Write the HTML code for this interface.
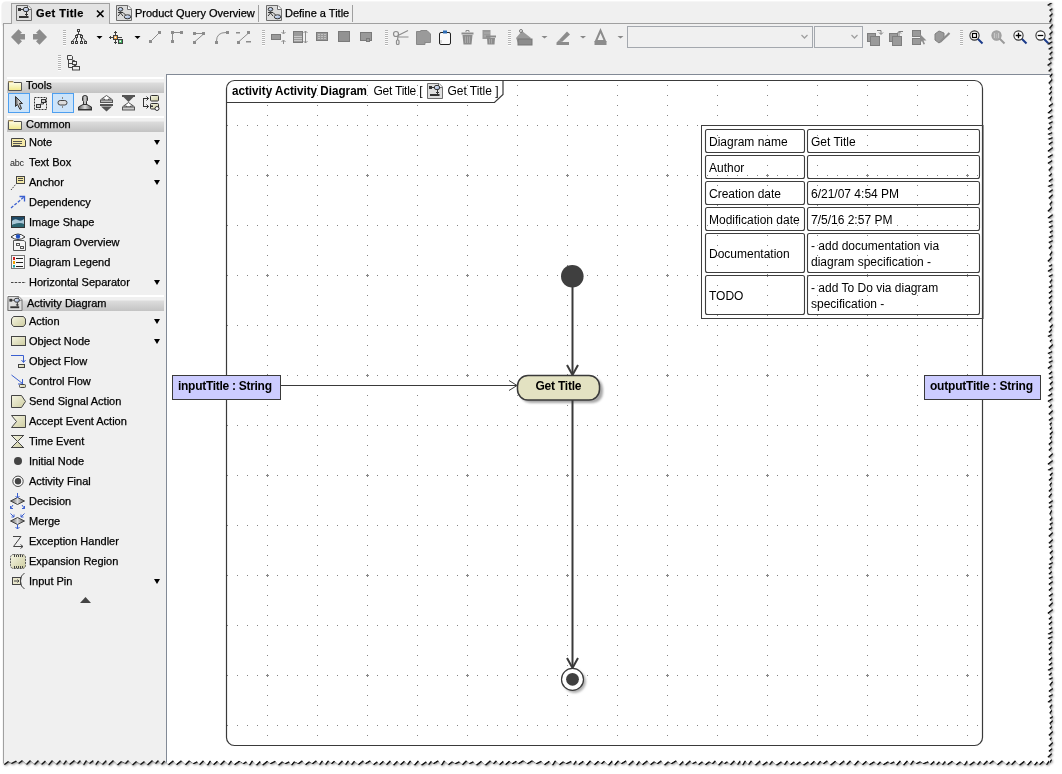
<!DOCTYPE html>
<html><head><meta charset="utf-8"><style>
*{box-sizing:border-box}
html,body{margin:0;padding:0;background:#fff;width:1062px;height:774px;overflow:hidden;font-family:"Liberation Sans", sans-serif}
#shadow{position:absolute;left:0;top:0;width:1062px;height:774px;filter:drop-shadow(1px 1px 0.4px rgba(0,0,0,.85)) drop-shadow(1px 1px 1.2px rgba(0,0,0,.45))}
#win{position:absolute;left:0;top:0;width:1062px;height:774px;background:#f0f0f0;clip-path:polygon(2px 4px,4px 2px,1051.5px 2px,1047px 5px,1052px 8px,1049px 10px,1052px 13px,1049px 16px,1051px 18px,1049px 22px,1052px 24px,1049px 28px,1052px 31px,1049px 34px,1051px 37px,1048px 39px,1052px 41px,1047px 44px,1052px 46px,1048px 49px,1052px 51px,1049px 54px,1052px 57px,1048px 59px,1051px 62px,1047px 65px,1051px 68px,1048px 71px,1052px 73px,1049px 76px,1051.5px 79px,1048px 83px,1051px 86px,1049px 89px,1051px 91px,1048px 94px,1051px 96px,1049px 100px,1052px 103px,1048px 106px,1051.5px 109px,1047px 113px,1052px 115px,1047px 118px,1052px 121px,1048px 123px,1051px 126px,1047px 129px,1051.5px 132px,1047px 134px,1052px 137px,1047px 139px,1052px 141px,1048px 144px,1052px 147px,1047px 151px,1052px 154px,1047px 157px,1051.5px 160px,1047px 163px,1051.5px 166px,1048px 170px,1051px 173px,1048px 176px,1052px 178px,1048px 181px,1052px 184px,1047px 186px,1052px 189px,1048px 192px,1052px 194px,1048px 198px,1051.5px 201px,1049px 204px,1051px 207px,1047px 211px,1052px 214px,1047px 218px,1052px 220px,1048px 222px,1052px 225px,1048px 227px,1052px 230px,1049px 232px,1052px 235px,1048px 237px,1052px 240px,1048px 242px,1051px 245px,1048px 248px,1051.5px 251px,1049px 255px,1051px 257px,1047px 261px,1051.5px 264px,1048px 266px,1051.5px 268px,1047px 271px,1052px 274px,1048px 276px,1051.5px 279px,1049px 282px,1051.5px 285px,1048px 287px,1051.5px 290px,1048px 293px,1051.5px 295px,1048px 298px,1051px 300px,1048px 303px,1051px 306px,1049px 309px,1051.5px 311px,1048px 315px,1051.5px 317px,1048px 321px,1052px 324px,1049px 327px,1051px 329px,1048px 332px,1051px 334px,1047px 336px,1051.5px 339px,1049px 341px,1052px 344px,1048px 348px,1051.5px 351px,1047px 353px,1051px 356px,1048px 358px,1052px 360px,1048px 362px,1051px 365px,1047px 368px,1051.5px 371px,1048px 374px,1052px 376px,1048px 378px,1052px 381px,1049px 384px,1052px 387px,1048px 390px,1051.5px 393px,1047px 396px,1052px 398px,1047px 401px,1051px 404px,1048px 407px,1052px 410px,1048px 414px,1052px 417px,1048px 420px,1051px 422px,1049px 424px,1051px 427px,1049px 429px,1052px 431px,1049px 434px,1051px 436px,1049px 438px,1051.5px 441px,1048px 444px,1051px 447px,1048px 450px,1052px 453px,1048px 457px,1052px 460px,1047px 464px,1052px 467px,1047px 470px,1052px 472px,1049px 475px,1051.5px 477px,1048px 480px,1051px 482px,1049px 485px,1051px 488px,1048px 491px,1051px 493px,1048px 497px,1052px 500px,1048px 503px,1051.5px 505px,1048px 507px,1051px 510px,1049px 514px,1051.5px 517px,1049px 520px,1052px 522px,1049px 524px,1051.5px 527px,1048px 529px,1052px 532px,1048px 536px,1052px 539px,1048px 543px,1051.5px 545px,1048px 547px,1052px 550px,1049px 553px,1052px 556px,1049px 559px,1052px 562px,1048px 564px,1051px 566px,1048px 568px,1051px 571px,1048px 574px,1052px 576px,1048px 578px,1052px 581px,1048px 584px,1051.5px 587px,1048px 590px,1052px 593px,1048px 596px,1051.5px 598px,1049px 600px,1052px 602px,1048px 606px,1052px 609px,1047px 613px,1051px 616px,1048px 619px,1051.5px 621px,1048px 624px,1051.5px 627px,1048px 629px,1052px 631px,1047px 634px,1052px 636px,1047px 638px,1051.5px 641px,1048px 644px,1051px 646px,1048px 649px,1051px 652px,1048px 654px,1051.5px 657px,1048px 660px,1051.5px 662px,1048px 665px,1052px 667px,1047px 670px,1051px 672px,1048px 675px,1052px 677px,1048px 679px,1052px 681px,1049px 685px,1052px 688px,1048px 691px,1052px 694px,1048px 696px,1051px 699px,1047px 702px,1051.5px 704px,1049px 707px,1051px 710px,1049px 713px,1052px 716px,1049px 718px,1052px 720px,1049px 723px,1051px 726px,1049px 728px,1052px 731px,1048px 735px,1051px 737px,1049px 739px,1052px 742px,1048px 746px,1051.5px 748px,1048px 751px,1051px 753px,1047px 757px,1051px 759px,1049px 762px,1049px 760px,1046px 764px,1043px 760.5px,1039px 764px,1037px 761px,1034px 764.5px,1031px 760px,1027px 764.5px,1024px 760.5px,1019px 764.5px,1015px 760px,1011px 764px,1009px 761px,1006px 764px,1002px 760px,997px 764px,993px 760px,989px 763px,987px 760px,983px 764px,980px 760.5px,977px 764px,974px 761px,969px 764.5px,967px 760px,964px 764.5px,960px 761px,956px 764px,952px 760.5px,947px 764px,945px 760.5px,942px 764px,939px 761px,936px 764px,934px 760.5px,930px 764px,928px 761px,923px 763px,920px 761px,916px 763px,913px 760px,910px 764px,907px 760px,903px 764.5px,900px 760px,896px 764.5px,894px 761px,890px 763px,888px 761px,883px 764px,880px 761px,877px 764px,874px 761px,869px 764px,866px 760.5px,862px 764px,858px 760px,854px 764.5px,850px 760px,846px 764px,844px 760px,839px 764px,835px 760.5px,830px 764.5px,827px 760px,823px 763px,820px 760.5px,817px 764px,814px 760.5px,810px 764px,808px 761px,803px 764.5px,800px 761px,796px 764px,794px 761px,790px 764px,787px 760px,784px 764px,781px 761px,776px 764.5px,772px 760.5px,769px 764px,767px 761px,762px 764.5px,760px 760px,755px 764.5px,751px 760px,748px 764px,745px 760px,742px 764.5px,740px 760px,737px 764px,734px 760px,730px 764px,727px 761px,724px 763px,722px 760.5px,718px 764.5px,715px 760px,712px 763px,709px 761px,705px 764px,702px 761px,698px 764px,696px 761px,692px 763px,690px 760px,685px 764.5px,683px 760.5px,679px 764.5px,676px 760px,671px 763px,668px 761px,664px 764.5px,661px 760px,657px 763px,654px 761px,650px 764px,647px 760px,642px 764px,639px 760.5px,636px 764.5px,633px 760px,628px 764.5px,626px 760px,621px 763px,618px 760px,614px 764.5px,612px 760px,608px 764.5px,604px 760.5px,601px 763px,598px 760.5px,594px 764px,590px 760px,586px 764.5px,583px 760.5px,578px 764px,576px 760px,573px 764px,571px 760.5px,566px 763px,563px 761px,559px 764px,555px 760px,552px 764.5px,549px 760.5px,544px 764px,541px 760.5px,536px 763px,532px 760px,527px 763px,523px 760px,518px 763px,516px 760.5px,512px 763px,509px 760.5px,505px 764px,503px 760.5px,499px 764px,496px 760px,493px 763px,490px 760px,485px 764.5px,481px 760.5px,476px 764.5px,473px 761px,469px 763px,466px 760px,462px 764px,459px 761px,455px 763px,452px 761px,448px 764px,444px 760px,441px 764.5px,438px 760px,433px 763px,431px 760.5px,428px 764px,426px 761px,421px 764.5px,418px 760px,414px 764.5px,410px 760px,407px 764px,404px 760.5px,400px 764px,397px 760.5px,393px 764.5px,390px 760px,386px 764px,383px 760.5px,379px 764px,377px 761px,373px 764px,370px 760px,365px 763px,363px 760px,358px 764px,354px 760.5px,351px 764px,348px 760px,345px 764px,342px 760px,338px 764px,334px 760.5px,331px 763px,328px 760px,325px 764px,322px 760px,319px 764px,316px 760px,312px 763px,309px 761px,305px 764px,302px 760px,298px 763px,294px 761px,291px 764.5px,289px 761px,285px 763px,282px 761px,278px 764.5px,275px 760.5px,270px 763px,267px 760.5px,262px 764.5px,260px 760.5px,256px 764.5px,252px 760px,249px 764.5px,246px 761px,243px 763px,239px 760.5px,234px 764px,231px 760px,228px 764px,224px 760px,220px 764px,217px 760.5px,213px 764px,210px 760px,207px 764.5px,203px 760px,199px 764px,197px 761px,193px 763px,189px 760px,185px 764px,181px 760px,176px 764px,173px 760px,168px 764px,164px 760.5px,161px 764px,158px 760px,155px 763px,152px 760px,147px 764.5px,144px 761px,140px 764px,136px 761px,132px 764.5px,128px 760px,125px 763px,121px 761px,117px 764.5px,113px 760px,108px 764.5px,106px 760px,102px 764px,98px 760.5px,95px 764.5px,93px 760px,89px 763px,86px 760px,83px 764.5px,80px 760px,77px 763px,74px 760px,69px 764px,66px 760px,63px 764px,60px 760px,56px 764px,52px 760px,48px 764.5px,45px 760.5px,41px 764px,38px 760px,34px 764px,30px 760px,26px 764px,22px 760px,18px 763px,16px 760.5px,11px 763px,8px 761px,4px 764px,3px 763px,3px 24px,2px 24px)}
.abs{position:absolute}
#win div{-webkit-text-stroke:0.25px #000}
.ph{position:absolute;left:7px;width:157px;height:16px;border-top:2px solid #fff;background:linear-gradient(#f0f0f0 0px,#f0f0f0 3px,#dcdcdc 4px,#c3c3c3 14px)}
.pt{position:absolute;font-size:11px;line-height:13px;color:#000}
.pi{position:absolute;left:29px;font-size:11px;line-height:13px;color:#000;white-space:nowrap}
.dd{position:absolute;left:154px;width:0;height:0;border-left:3.5px solid transparent;border-right:3.5px solid transparent;border-top:5px solid #000}
</style></head><body>
<div id="shadow"><div id="win">
<!-- tab strip -->
<div class="abs" style="left:3px;top:23px;width:1060px;height:1px;background:#a0a0a0"></div>
<div class="abs" style="left:11px;top:3px;width:99px;height:21px;background:#e3e3e3;border:1px solid #a0a0a0;border-bottom:none"></div>
<div class="abs" style="left:36px;top:7px;font-size:11px;font-weight:bold;letter-spacing:0.45px;line-height:13px">Get Title</div>
<div class="abs" style="left:135px;top:7px;font-size:11px;line-height:13px">Product Query Overview</div>
<div class="abs" style="left:258px;top:5px;width:1px;height:17px;background:#a0a0a0"></div>
<div class="abs" style="left:285px;top:7px;font-size:11px;line-height:13px">Define a Title</div>
<div class="abs" style="left:352px;top:5px;width:1px;height:17px;background:#a0a0a0"></div>
<!-- left border -->
<div class="abs" style="left:3px;top:23px;width:1px;height:760px;background:#a0a0a0"></div>
<!-- palette -->
<div class="ph" style="top:77px"></div><div class="pt" style="top:79px;left:26px">Tools</div>
<div class="ph" style="top:116px"></div><div class="pt" style="top:118px;left:26px">Common</div>
<div class="pi" style="top:136px">Note</div><div class="dd" style="top:140px"></div>
<div class="pi" style="top:156px">Text Box</div><div class="dd" style="top:160px"></div>
<div class="pi" style="top:176px">Anchor</div><div class="dd" style="top:180px"></div>
<div class="pi" style="top:196px">Dependency</div>
<div class="pi" style="top:216px">Image Shape</div>
<div class="pi" style="top:236px">Diagram Overview</div>
<div class="pi" style="top:256px">Diagram Legend</div>
<div class="pi" style="top:276px">Horizontal Separator</div><div class="dd" style="top:280px"></div>
<div class="ph" style="top:295px"></div><div class="pt" style="top:297px;left:27px">Activity Diagram</div>
<div class="pi" style="top:315px">Action</div><div class="dd" style="top:319px"></div>
<div class="pi" style="top:335px">Object Node</div><div class="dd" style="top:339px"></div>
<div class="pi" style="top:355px">Object Flow</div>
<div class="pi" style="top:375px">Control Flow</div>
<div class="pi" style="top:395px">Send Signal Action</div>
<div class="pi" style="top:415px">Accept Event Action</div>
<div class="pi" style="top:435px">Time Event</div>
<div class="pi" style="top:455px">Initial Node</div>
<div class="pi" style="top:475px">Activity Final</div>
<div class="pi" style="top:495px">Decision</div>
<div class="pi" style="top:515px">Merge</div>
<div class="pi" style="top:535px">Exception Handler</div>
<div class="pi" style="top:555px">Expansion Region</div>
<div class="pi" style="top:575px">Input Pin</div><div class="dd" style="top:579px"></div>
<!-- canvas -->
<div class="abs" style="left:166px;top:74px;width:900px;height:700px;background:#fff;border-left:1px solid #828a96;border-top:1px solid #828a96"></div>
<svg class="abs" style="left:0;top:0" width="1062" height="774" viewBox="0 0 1062 774">
<defs><clipPath id="fc"><rect x="226.5" y="80.5" width="756" height="665" rx="8" ry="8"/></clipPath>
<filter id="sh" x="-20%" y="-20%" width="140%" height="140%"><feGaussianBlur stdDeviation="0.8"/></filter></defs>
<path clip-path="url(#fc)" fill="#858585" d="M267 85h1v1h-1zM267 95h1v1h-1zM267 105h1v1h-1zM267 115h1v1h-1zM267 135h1v1h-1zM267 145h1v1h-1zM267 155h1v1h-1zM267 165h1v1h-1zM267 185h1v1h-1zM267 195h1v1h-1zM267 205h1v1h-1zM267 215h1v1h-1zM267 235h1v1h-1zM267 245h1v1h-1zM267 255h1v1h-1zM267 265h1v1h-1zM267 285h1v1h-1zM267 295h1v1h-1zM267 305h1v1h-1zM267 315h1v1h-1zM267 335h1v1h-1zM267 345h1v1h-1zM267 355h1v1h-1zM267 365h1v1h-1zM267 385h1v1h-1zM267 395h1v1h-1zM267 405h1v1h-1zM267 415h1v1h-1zM267 435h1v1h-1zM267 445h1v1h-1zM267 455h1v1h-1zM267 465h1v1h-1zM267 485h1v1h-1zM267 495h1v1h-1zM267 505h1v1h-1zM267 515h1v1h-1zM267 535h1v1h-1zM267 545h1v1h-1zM267 555h1v1h-1zM267 565h1v1h-1zM267 585h1v1h-1zM267 595h1v1h-1zM267 605h1v1h-1zM267 615h1v1h-1zM267 635h1v1h-1zM267 645h1v1h-1zM267 655h1v1h-1zM267 665h1v1h-1zM267 685h1v1h-1zM267 695h1v1h-1zM267 705h1v1h-1zM267 715h1v1h-1zM267 735h1v1h-1zM267 745h1v1h-1zM317 85h1v1h-1zM317 95h1v1h-1zM317 105h1v1h-1zM317 115h1v1h-1zM317 135h1v1h-1zM317 145h1v1h-1zM317 155h1v1h-1zM317 165h1v1h-1zM317 185h1v1h-1zM317 195h1v1h-1zM317 205h1v1h-1zM317 215h1v1h-1zM317 235h1v1h-1zM317 245h1v1h-1zM317 255h1v1h-1zM317 265h1v1h-1zM317 285h1v1h-1zM317 295h1v1h-1zM317 305h1v1h-1zM317 315h1v1h-1zM317 335h1v1h-1zM317 345h1v1h-1zM317 355h1v1h-1zM317 365h1v1h-1zM317 385h1v1h-1zM317 395h1v1h-1zM317 405h1v1h-1zM317 415h1v1h-1zM317 435h1v1h-1zM317 445h1v1h-1zM317 455h1v1h-1zM317 465h1v1h-1zM317 485h1v1h-1zM317 495h1v1h-1zM317 505h1v1h-1zM317 515h1v1h-1zM317 535h1v1h-1zM317 545h1v1h-1zM317 555h1v1h-1zM317 565h1v1h-1zM317 585h1v1h-1zM317 595h1v1h-1zM317 605h1v1h-1zM317 615h1v1h-1zM317 635h1v1h-1zM317 645h1v1h-1zM317 655h1v1h-1zM317 665h1v1h-1zM317 685h1v1h-1zM317 695h1v1h-1zM317 705h1v1h-1zM317 715h1v1h-1zM317 735h1v1h-1zM317 745h1v1h-1zM367 85h1v1h-1zM367 95h1v1h-1zM367 105h1v1h-1zM367 115h1v1h-1zM367 135h1v1h-1zM367 145h1v1h-1zM367 155h1v1h-1zM367 165h1v1h-1zM367 185h1v1h-1zM367 195h1v1h-1zM367 205h1v1h-1zM367 215h1v1h-1zM367 235h1v1h-1zM367 245h1v1h-1zM367 255h1v1h-1zM367 265h1v1h-1zM367 285h1v1h-1zM367 295h1v1h-1zM367 305h1v1h-1zM367 315h1v1h-1zM367 335h1v1h-1zM367 345h1v1h-1zM367 355h1v1h-1zM367 365h1v1h-1zM367 385h1v1h-1zM367 395h1v1h-1zM367 405h1v1h-1zM367 415h1v1h-1zM367 435h1v1h-1zM367 445h1v1h-1zM367 455h1v1h-1zM367 465h1v1h-1zM367 485h1v1h-1zM367 495h1v1h-1zM367 505h1v1h-1zM367 515h1v1h-1zM367 535h1v1h-1zM367 545h1v1h-1zM367 555h1v1h-1zM367 565h1v1h-1zM367 585h1v1h-1zM367 595h1v1h-1zM367 605h1v1h-1zM367 615h1v1h-1zM367 635h1v1h-1zM367 645h1v1h-1zM367 655h1v1h-1zM367 665h1v1h-1zM367 685h1v1h-1zM367 695h1v1h-1zM367 705h1v1h-1zM367 715h1v1h-1zM367 735h1v1h-1zM367 745h1v1h-1zM417 85h1v1h-1zM417 95h1v1h-1zM417 105h1v1h-1zM417 115h1v1h-1zM417 135h1v1h-1zM417 145h1v1h-1zM417 155h1v1h-1zM417 165h1v1h-1zM417 185h1v1h-1zM417 195h1v1h-1zM417 205h1v1h-1zM417 215h1v1h-1zM417 235h1v1h-1zM417 245h1v1h-1zM417 255h1v1h-1zM417 265h1v1h-1zM417 285h1v1h-1zM417 295h1v1h-1zM417 305h1v1h-1zM417 315h1v1h-1zM417 335h1v1h-1zM417 345h1v1h-1zM417 355h1v1h-1zM417 365h1v1h-1zM417 385h1v1h-1zM417 395h1v1h-1zM417 405h1v1h-1zM417 415h1v1h-1zM417 435h1v1h-1zM417 445h1v1h-1zM417 455h1v1h-1zM417 465h1v1h-1zM417 485h1v1h-1zM417 495h1v1h-1zM417 505h1v1h-1zM417 515h1v1h-1zM417 535h1v1h-1zM417 545h1v1h-1zM417 555h1v1h-1zM417 565h1v1h-1zM417 585h1v1h-1zM417 595h1v1h-1zM417 605h1v1h-1zM417 615h1v1h-1zM417 635h1v1h-1zM417 645h1v1h-1zM417 655h1v1h-1zM417 665h1v1h-1zM417 685h1v1h-1zM417 695h1v1h-1zM417 705h1v1h-1zM417 715h1v1h-1zM417 735h1v1h-1zM417 745h1v1h-1zM467 85h1v1h-1zM467 95h1v1h-1zM467 105h1v1h-1zM467 115h1v1h-1zM467 135h1v1h-1zM467 145h1v1h-1zM467 155h1v1h-1zM467 165h1v1h-1zM467 185h1v1h-1zM467 195h1v1h-1zM467 205h1v1h-1zM467 215h1v1h-1zM467 235h1v1h-1zM467 245h1v1h-1zM467 255h1v1h-1zM467 265h1v1h-1zM467 285h1v1h-1zM467 295h1v1h-1zM467 305h1v1h-1zM467 315h1v1h-1zM467 335h1v1h-1zM467 345h1v1h-1zM467 355h1v1h-1zM467 365h1v1h-1zM467 385h1v1h-1zM467 395h1v1h-1zM467 405h1v1h-1zM467 415h1v1h-1zM467 435h1v1h-1zM467 445h1v1h-1zM467 455h1v1h-1zM467 465h1v1h-1zM467 485h1v1h-1zM467 495h1v1h-1zM467 505h1v1h-1zM467 515h1v1h-1zM467 535h1v1h-1zM467 545h1v1h-1zM467 555h1v1h-1zM467 565h1v1h-1zM467 585h1v1h-1zM467 595h1v1h-1zM467 605h1v1h-1zM467 615h1v1h-1zM467 635h1v1h-1zM467 645h1v1h-1zM467 655h1v1h-1zM467 665h1v1h-1zM467 685h1v1h-1zM467 695h1v1h-1zM467 705h1v1h-1zM467 715h1v1h-1zM467 735h1v1h-1zM467 745h1v1h-1zM517 85h1v1h-1zM517 95h1v1h-1zM517 105h1v1h-1zM517 115h1v1h-1zM517 135h1v1h-1zM517 145h1v1h-1zM517 155h1v1h-1zM517 165h1v1h-1zM517 185h1v1h-1zM517 195h1v1h-1zM517 205h1v1h-1zM517 215h1v1h-1zM517 235h1v1h-1zM517 245h1v1h-1zM517 255h1v1h-1zM517 265h1v1h-1zM517 285h1v1h-1zM517 295h1v1h-1zM517 305h1v1h-1zM517 315h1v1h-1zM517 335h1v1h-1zM517 345h1v1h-1zM517 355h1v1h-1zM517 365h1v1h-1zM517 385h1v1h-1zM517 395h1v1h-1zM517 405h1v1h-1zM517 415h1v1h-1zM517 435h1v1h-1zM517 445h1v1h-1zM517 455h1v1h-1zM517 465h1v1h-1zM517 485h1v1h-1zM517 495h1v1h-1zM517 505h1v1h-1zM517 515h1v1h-1zM517 535h1v1h-1zM517 545h1v1h-1zM517 555h1v1h-1zM517 565h1v1h-1zM517 585h1v1h-1zM517 595h1v1h-1zM517 605h1v1h-1zM517 615h1v1h-1zM517 635h1v1h-1zM517 645h1v1h-1zM517 655h1v1h-1zM517 665h1v1h-1zM517 685h1v1h-1zM517 695h1v1h-1zM517 705h1v1h-1zM517 715h1v1h-1zM517 735h1v1h-1zM517 745h1v1h-1zM567 85h1v1h-1zM567 95h1v1h-1zM567 105h1v1h-1zM567 115h1v1h-1zM567 135h1v1h-1zM567 145h1v1h-1zM567 155h1v1h-1zM567 165h1v1h-1zM567 185h1v1h-1zM567 195h1v1h-1zM567 205h1v1h-1zM567 215h1v1h-1zM567 235h1v1h-1zM567 245h1v1h-1zM567 255h1v1h-1zM567 265h1v1h-1zM567 285h1v1h-1zM567 295h1v1h-1zM567 305h1v1h-1zM567 315h1v1h-1zM567 335h1v1h-1zM567 345h1v1h-1zM567 355h1v1h-1zM567 365h1v1h-1zM567 385h1v1h-1zM567 395h1v1h-1zM567 405h1v1h-1zM567 415h1v1h-1zM567 435h1v1h-1zM567 445h1v1h-1zM567 455h1v1h-1zM567 465h1v1h-1zM567 485h1v1h-1zM567 495h1v1h-1zM567 505h1v1h-1zM567 515h1v1h-1zM567 535h1v1h-1zM567 545h1v1h-1zM567 555h1v1h-1zM567 565h1v1h-1zM567 585h1v1h-1zM567 595h1v1h-1zM567 605h1v1h-1zM567 615h1v1h-1zM567 635h1v1h-1zM567 645h1v1h-1zM567 655h1v1h-1zM567 665h1v1h-1zM567 685h1v1h-1zM567 695h1v1h-1zM567 705h1v1h-1zM567 715h1v1h-1zM567 735h1v1h-1zM567 745h1v1h-1zM617 85h1v1h-1zM617 95h1v1h-1zM617 105h1v1h-1zM617 115h1v1h-1zM617 135h1v1h-1zM617 145h1v1h-1zM617 155h1v1h-1zM617 165h1v1h-1zM617 185h1v1h-1zM617 195h1v1h-1zM617 205h1v1h-1zM617 215h1v1h-1zM617 235h1v1h-1zM617 245h1v1h-1zM617 255h1v1h-1zM617 265h1v1h-1zM617 285h1v1h-1zM617 295h1v1h-1zM617 305h1v1h-1zM617 315h1v1h-1zM617 335h1v1h-1zM617 345h1v1h-1zM617 355h1v1h-1zM617 365h1v1h-1zM617 385h1v1h-1zM617 395h1v1h-1zM617 405h1v1h-1zM617 415h1v1h-1zM617 435h1v1h-1zM617 445h1v1h-1zM617 455h1v1h-1zM617 465h1v1h-1zM617 485h1v1h-1zM617 495h1v1h-1zM617 505h1v1h-1zM617 515h1v1h-1zM617 535h1v1h-1zM617 545h1v1h-1zM617 555h1v1h-1zM617 565h1v1h-1zM617 585h1v1h-1zM617 595h1v1h-1zM617 605h1v1h-1zM617 615h1v1h-1zM617 635h1v1h-1zM617 645h1v1h-1zM617 655h1v1h-1zM617 665h1v1h-1zM617 685h1v1h-1zM617 695h1v1h-1zM617 705h1v1h-1zM617 715h1v1h-1zM617 735h1v1h-1zM617 745h1v1h-1zM667 85h1v1h-1zM667 95h1v1h-1zM667 105h1v1h-1zM667 115h1v1h-1zM667 135h1v1h-1zM667 145h1v1h-1zM667 155h1v1h-1zM667 165h1v1h-1zM667 185h1v1h-1zM667 195h1v1h-1zM667 205h1v1h-1zM667 215h1v1h-1zM667 235h1v1h-1zM667 245h1v1h-1zM667 255h1v1h-1zM667 265h1v1h-1zM667 285h1v1h-1zM667 295h1v1h-1zM667 305h1v1h-1zM667 315h1v1h-1zM667 335h1v1h-1zM667 345h1v1h-1zM667 355h1v1h-1zM667 365h1v1h-1zM667 385h1v1h-1zM667 395h1v1h-1zM667 405h1v1h-1zM667 415h1v1h-1zM667 435h1v1h-1zM667 445h1v1h-1zM667 455h1v1h-1zM667 465h1v1h-1zM667 485h1v1h-1zM667 495h1v1h-1zM667 505h1v1h-1zM667 515h1v1h-1zM667 535h1v1h-1zM667 545h1v1h-1zM667 555h1v1h-1zM667 565h1v1h-1zM667 585h1v1h-1zM667 595h1v1h-1zM667 605h1v1h-1zM667 615h1v1h-1zM667 635h1v1h-1zM667 645h1v1h-1zM667 655h1v1h-1zM667 665h1v1h-1zM667 685h1v1h-1zM667 695h1v1h-1zM667 705h1v1h-1zM667 715h1v1h-1zM667 735h1v1h-1zM667 745h1v1h-1zM717 85h1v1h-1zM717 95h1v1h-1zM717 105h1v1h-1zM717 115h1v1h-1zM717 135h1v1h-1zM717 145h1v1h-1zM717 155h1v1h-1zM717 165h1v1h-1zM717 185h1v1h-1zM717 195h1v1h-1zM717 205h1v1h-1zM717 215h1v1h-1zM717 235h1v1h-1zM717 245h1v1h-1zM717 255h1v1h-1zM717 265h1v1h-1zM717 285h1v1h-1zM717 295h1v1h-1zM717 305h1v1h-1zM717 315h1v1h-1zM717 335h1v1h-1zM717 345h1v1h-1zM717 355h1v1h-1zM717 365h1v1h-1zM717 385h1v1h-1zM717 395h1v1h-1zM717 405h1v1h-1zM717 415h1v1h-1zM717 435h1v1h-1zM717 445h1v1h-1zM717 455h1v1h-1zM717 465h1v1h-1zM717 485h1v1h-1zM717 495h1v1h-1zM717 505h1v1h-1zM717 515h1v1h-1zM717 535h1v1h-1zM717 545h1v1h-1zM717 555h1v1h-1zM717 565h1v1h-1zM717 585h1v1h-1zM717 595h1v1h-1zM717 605h1v1h-1zM717 615h1v1h-1zM717 635h1v1h-1zM717 645h1v1h-1zM717 655h1v1h-1zM717 665h1v1h-1zM717 685h1v1h-1zM717 695h1v1h-1zM717 705h1v1h-1zM717 715h1v1h-1zM717 735h1v1h-1zM717 745h1v1h-1zM767 85h1v1h-1zM767 95h1v1h-1zM767 105h1v1h-1zM767 115h1v1h-1zM767 135h1v1h-1zM767 145h1v1h-1zM767 155h1v1h-1zM767 165h1v1h-1zM767 185h1v1h-1zM767 195h1v1h-1zM767 205h1v1h-1zM767 215h1v1h-1zM767 235h1v1h-1zM767 245h1v1h-1zM767 255h1v1h-1zM767 265h1v1h-1zM767 285h1v1h-1zM767 295h1v1h-1zM767 305h1v1h-1zM767 315h1v1h-1zM767 335h1v1h-1zM767 345h1v1h-1zM767 355h1v1h-1zM767 365h1v1h-1zM767 385h1v1h-1zM767 395h1v1h-1zM767 405h1v1h-1zM767 415h1v1h-1zM767 435h1v1h-1zM767 445h1v1h-1zM767 455h1v1h-1zM767 465h1v1h-1zM767 485h1v1h-1zM767 495h1v1h-1zM767 505h1v1h-1zM767 515h1v1h-1zM767 535h1v1h-1zM767 545h1v1h-1zM767 555h1v1h-1zM767 565h1v1h-1zM767 585h1v1h-1zM767 595h1v1h-1zM767 605h1v1h-1zM767 615h1v1h-1zM767 635h1v1h-1zM767 645h1v1h-1zM767 655h1v1h-1zM767 665h1v1h-1zM767 685h1v1h-1zM767 695h1v1h-1zM767 705h1v1h-1zM767 715h1v1h-1zM767 735h1v1h-1zM767 745h1v1h-1zM817 85h1v1h-1zM817 95h1v1h-1zM817 105h1v1h-1zM817 115h1v1h-1zM817 135h1v1h-1zM817 145h1v1h-1zM817 155h1v1h-1zM817 165h1v1h-1zM817 185h1v1h-1zM817 195h1v1h-1zM817 205h1v1h-1zM817 215h1v1h-1zM817 235h1v1h-1zM817 245h1v1h-1zM817 255h1v1h-1zM817 265h1v1h-1zM817 285h1v1h-1zM817 295h1v1h-1zM817 305h1v1h-1zM817 315h1v1h-1zM817 335h1v1h-1zM817 345h1v1h-1zM817 355h1v1h-1zM817 365h1v1h-1zM817 385h1v1h-1zM817 395h1v1h-1zM817 405h1v1h-1zM817 415h1v1h-1zM817 435h1v1h-1zM817 445h1v1h-1zM817 455h1v1h-1zM817 465h1v1h-1zM817 485h1v1h-1zM817 495h1v1h-1zM817 505h1v1h-1zM817 515h1v1h-1zM817 535h1v1h-1zM817 545h1v1h-1zM817 555h1v1h-1zM817 565h1v1h-1zM817 585h1v1h-1zM817 595h1v1h-1zM817 605h1v1h-1zM817 615h1v1h-1zM817 635h1v1h-1zM817 645h1v1h-1zM817 655h1v1h-1zM817 665h1v1h-1zM817 685h1v1h-1zM817 695h1v1h-1zM817 705h1v1h-1zM817 715h1v1h-1zM817 735h1v1h-1zM817 745h1v1h-1zM867 85h1v1h-1zM867 95h1v1h-1zM867 105h1v1h-1zM867 115h1v1h-1zM867 135h1v1h-1zM867 145h1v1h-1zM867 155h1v1h-1zM867 165h1v1h-1zM867 185h1v1h-1zM867 195h1v1h-1zM867 205h1v1h-1zM867 215h1v1h-1zM867 235h1v1h-1zM867 245h1v1h-1zM867 255h1v1h-1zM867 265h1v1h-1zM867 285h1v1h-1zM867 295h1v1h-1zM867 305h1v1h-1zM867 315h1v1h-1zM867 335h1v1h-1zM867 345h1v1h-1zM867 355h1v1h-1zM867 365h1v1h-1zM867 385h1v1h-1zM867 395h1v1h-1zM867 405h1v1h-1zM867 415h1v1h-1zM867 435h1v1h-1zM867 445h1v1h-1zM867 455h1v1h-1zM867 465h1v1h-1zM867 485h1v1h-1zM867 495h1v1h-1zM867 505h1v1h-1zM867 515h1v1h-1zM867 535h1v1h-1zM867 545h1v1h-1zM867 555h1v1h-1zM867 565h1v1h-1zM867 585h1v1h-1zM867 595h1v1h-1zM867 605h1v1h-1zM867 615h1v1h-1zM867 635h1v1h-1zM867 645h1v1h-1zM867 655h1v1h-1zM867 665h1v1h-1zM867 685h1v1h-1zM867 695h1v1h-1zM867 705h1v1h-1zM867 715h1v1h-1zM867 735h1v1h-1zM867 745h1v1h-1zM917 85h1v1h-1zM917 95h1v1h-1zM917 105h1v1h-1zM917 115h1v1h-1zM917 135h1v1h-1zM917 145h1v1h-1zM917 155h1v1h-1zM917 165h1v1h-1zM917 185h1v1h-1zM917 195h1v1h-1zM917 205h1v1h-1zM917 215h1v1h-1zM917 235h1v1h-1zM917 245h1v1h-1zM917 255h1v1h-1zM917 265h1v1h-1zM917 285h1v1h-1zM917 295h1v1h-1zM917 305h1v1h-1zM917 315h1v1h-1zM917 335h1v1h-1zM917 345h1v1h-1zM917 355h1v1h-1zM917 365h1v1h-1zM917 385h1v1h-1zM917 395h1v1h-1zM917 405h1v1h-1zM917 415h1v1h-1zM917 435h1v1h-1zM917 445h1v1h-1zM917 455h1v1h-1zM917 465h1v1h-1zM917 485h1v1h-1zM917 495h1v1h-1zM917 505h1v1h-1zM917 515h1v1h-1zM917 535h1v1h-1zM917 545h1v1h-1zM917 555h1v1h-1zM917 565h1v1h-1zM917 585h1v1h-1zM917 595h1v1h-1zM917 605h1v1h-1zM917 615h1v1h-1zM917 635h1v1h-1zM917 645h1v1h-1zM917 655h1v1h-1zM917 665h1v1h-1zM917 685h1v1h-1zM917 695h1v1h-1zM917 705h1v1h-1zM917 715h1v1h-1zM917 735h1v1h-1zM917 745h1v1h-1zM967 85h1v1h-1zM967 95h1v1h-1zM967 105h1v1h-1zM967 115h1v1h-1zM967 135h1v1h-1zM967 145h1v1h-1zM967 155h1v1h-1zM967 165h1v1h-1zM967 185h1v1h-1zM967 195h1v1h-1zM967 205h1v1h-1zM967 215h1v1h-1zM967 235h1v1h-1zM967 245h1v1h-1zM967 255h1v1h-1zM967 265h1v1h-1zM967 285h1v1h-1zM967 295h1v1h-1zM967 305h1v1h-1zM967 315h1v1h-1zM967 335h1v1h-1zM967 345h1v1h-1zM967 355h1v1h-1zM967 365h1v1h-1zM967 385h1v1h-1zM967 395h1v1h-1zM967 405h1v1h-1zM967 415h1v1h-1zM967 435h1v1h-1zM967 445h1v1h-1zM967 455h1v1h-1zM967 465h1v1h-1zM967 485h1v1h-1zM967 495h1v1h-1zM967 505h1v1h-1zM967 515h1v1h-1zM967 535h1v1h-1zM967 545h1v1h-1zM967 555h1v1h-1zM967 565h1v1h-1zM967 585h1v1h-1zM967 595h1v1h-1zM967 605h1v1h-1zM967 615h1v1h-1zM967 635h1v1h-1zM967 645h1v1h-1zM967 655h1v1h-1zM967 665h1v1h-1zM967 685h1v1h-1zM967 695h1v1h-1zM967 705h1v1h-1zM967 715h1v1h-1zM967 735h1v1h-1zM967 745h1v1h-1zM227 125h1v1h-1zM237 125h1v1h-1zM247 125h1v1h-1zM257 125h1v1h-1zM267 125h1v1h-1zM277 125h1v1h-1zM287 125h1v1h-1zM297 125h1v1h-1zM307 125h1v1h-1zM317 125h1v1h-1zM327 125h1v1h-1zM337 125h1v1h-1zM347 125h1v1h-1zM357 125h1v1h-1zM367 125h1v1h-1zM377 125h1v1h-1zM387 125h1v1h-1zM397 125h1v1h-1zM407 125h1v1h-1zM417 125h1v1h-1zM427 125h1v1h-1zM437 125h1v1h-1zM447 125h1v1h-1zM457 125h1v1h-1zM467 125h1v1h-1zM477 125h1v1h-1zM487 125h1v1h-1zM497 125h1v1h-1zM507 125h1v1h-1zM517 125h1v1h-1zM527 125h1v1h-1zM537 125h1v1h-1zM547 125h1v1h-1zM557 125h1v1h-1zM567 125h1v1h-1zM577 125h1v1h-1zM587 125h1v1h-1zM597 125h1v1h-1zM607 125h1v1h-1zM617 125h1v1h-1zM627 125h1v1h-1zM637 125h1v1h-1zM647 125h1v1h-1zM657 125h1v1h-1zM667 125h1v1h-1zM677 125h1v1h-1zM687 125h1v1h-1zM697 125h1v1h-1zM707 125h1v1h-1zM717 125h1v1h-1zM727 125h1v1h-1zM737 125h1v1h-1zM747 125h1v1h-1zM757 125h1v1h-1zM767 125h1v1h-1zM777 125h1v1h-1zM787 125h1v1h-1zM797 125h1v1h-1zM807 125h1v1h-1zM817 125h1v1h-1zM827 125h1v1h-1zM837 125h1v1h-1zM847 125h1v1h-1zM857 125h1v1h-1zM867 125h1v1h-1zM877 125h1v1h-1zM887 125h1v1h-1zM897 125h1v1h-1zM907 125h1v1h-1zM917 125h1v1h-1zM927 125h1v1h-1zM937 125h1v1h-1zM947 125h1v1h-1zM957 125h1v1h-1zM967 125h1v1h-1zM977 125h1v1h-1zM227 175h1v1h-1zM237 175h1v1h-1zM247 175h1v1h-1zM257 175h1v1h-1zM267 175h1v1h-1zM266 175h1v1h-1zM268 175h1v1h-1zM267 174h1v1h-1zM267 176h1v1h-1zM277 175h1v1h-1zM287 175h1v1h-1zM297 175h1v1h-1zM307 175h1v1h-1zM317 175h1v1h-1zM327 175h1v1h-1zM337 175h1v1h-1zM347 175h1v1h-1zM357 175h1v1h-1zM367 175h1v1h-1zM366 175h1v1h-1zM368 175h1v1h-1zM367 174h1v1h-1zM367 176h1v1h-1zM377 175h1v1h-1zM387 175h1v1h-1zM397 175h1v1h-1zM407 175h1v1h-1zM417 175h1v1h-1zM427 175h1v1h-1zM437 175h1v1h-1zM447 175h1v1h-1zM457 175h1v1h-1zM467 175h1v1h-1zM466 175h1v1h-1zM468 175h1v1h-1zM467 174h1v1h-1zM467 176h1v1h-1zM477 175h1v1h-1zM487 175h1v1h-1zM497 175h1v1h-1zM507 175h1v1h-1zM517 175h1v1h-1zM527 175h1v1h-1zM537 175h1v1h-1zM547 175h1v1h-1zM557 175h1v1h-1zM567 175h1v1h-1zM566 175h1v1h-1zM568 175h1v1h-1zM567 174h1v1h-1zM567 176h1v1h-1zM577 175h1v1h-1zM587 175h1v1h-1zM597 175h1v1h-1zM607 175h1v1h-1zM617 175h1v1h-1zM627 175h1v1h-1zM637 175h1v1h-1zM647 175h1v1h-1zM657 175h1v1h-1zM667 175h1v1h-1zM666 175h1v1h-1zM668 175h1v1h-1zM667 174h1v1h-1zM667 176h1v1h-1zM677 175h1v1h-1zM687 175h1v1h-1zM697 175h1v1h-1zM707 175h1v1h-1zM717 175h1v1h-1zM727 175h1v1h-1zM737 175h1v1h-1zM747 175h1v1h-1zM757 175h1v1h-1zM767 175h1v1h-1zM766 175h1v1h-1zM768 175h1v1h-1zM767 174h1v1h-1zM767 176h1v1h-1zM777 175h1v1h-1zM787 175h1v1h-1zM797 175h1v1h-1zM807 175h1v1h-1zM817 175h1v1h-1zM827 175h1v1h-1zM837 175h1v1h-1zM847 175h1v1h-1zM857 175h1v1h-1zM867 175h1v1h-1zM866 175h1v1h-1zM868 175h1v1h-1zM867 174h1v1h-1zM867 176h1v1h-1zM877 175h1v1h-1zM887 175h1v1h-1zM897 175h1v1h-1zM907 175h1v1h-1zM917 175h1v1h-1zM927 175h1v1h-1zM937 175h1v1h-1zM947 175h1v1h-1zM957 175h1v1h-1zM967 175h1v1h-1zM966 175h1v1h-1zM968 175h1v1h-1zM967 174h1v1h-1zM967 176h1v1h-1zM977 175h1v1h-1zM227 225h1v1h-1zM237 225h1v1h-1zM247 225h1v1h-1zM257 225h1v1h-1zM267 225h1v1h-1zM277 225h1v1h-1zM287 225h1v1h-1zM297 225h1v1h-1zM307 225h1v1h-1zM317 225h1v1h-1zM327 225h1v1h-1zM337 225h1v1h-1zM347 225h1v1h-1zM357 225h1v1h-1zM367 225h1v1h-1zM377 225h1v1h-1zM387 225h1v1h-1zM397 225h1v1h-1zM407 225h1v1h-1zM417 225h1v1h-1zM427 225h1v1h-1zM437 225h1v1h-1zM447 225h1v1h-1zM457 225h1v1h-1zM467 225h1v1h-1zM477 225h1v1h-1zM487 225h1v1h-1zM497 225h1v1h-1zM507 225h1v1h-1zM517 225h1v1h-1zM527 225h1v1h-1zM537 225h1v1h-1zM547 225h1v1h-1zM557 225h1v1h-1zM567 225h1v1h-1zM577 225h1v1h-1zM587 225h1v1h-1zM597 225h1v1h-1zM607 225h1v1h-1zM617 225h1v1h-1zM627 225h1v1h-1zM637 225h1v1h-1zM647 225h1v1h-1zM657 225h1v1h-1zM667 225h1v1h-1zM677 225h1v1h-1zM687 225h1v1h-1zM697 225h1v1h-1zM707 225h1v1h-1zM717 225h1v1h-1zM727 225h1v1h-1zM737 225h1v1h-1zM747 225h1v1h-1zM757 225h1v1h-1zM767 225h1v1h-1zM777 225h1v1h-1zM787 225h1v1h-1zM797 225h1v1h-1zM807 225h1v1h-1zM817 225h1v1h-1zM827 225h1v1h-1zM837 225h1v1h-1zM847 225h1v1h-1zM857 225h1v1h-1zM867 225h1v1h-1zM877 225h1v1h-1zM887 225h1v1h-1zM897 225h1v1h-1zM907 225h1v1h-1zM917 225h1v1h-1zM927 225h1v1h-1zM937 225h1v1h-1zM947 225h1v1h-1zM957 225h1v1h-1zM967 225h1v1h-1zM977 225h1v1h-1zM227 275h1v1h-1zM237 275h1v1h-1zM247 275h1v1h-1zM257 275h1v1h-1zM267 275h1v1h-1zM266 275h1v1h-1zM268 275h1v1h-1zM267 274h1v1h-1zM267 276h1v1h-1zM277 275h1v1h-1zM287 275h1v1h-1zM297 275h1v1h-1zM307 275h1v1h-1zM317 275h1v1h-1zM327 275h1v1h-1zM337 275h1v1h-1zM347 275h1v1h-1zM357 275h1v1h-1zM367 275h1v1h-1zM366 275h1v1h-1zM368 275h1v1h-1zM367 274h1v1h-1zM367 276h1v1h-1zM377 275h1v1h-1zM387 275h1v1h-1zM397 275h1v1h-1zM407 275h1v1h-1zM417 275h1v1h-1zM427 275h1v1h-1zM437 275h1v1h-1zM447 275h1v1h-1zM457 275h1v1h-1zM467 275h1v1h-1zM466 275h1v1h-1zM468 275h1v1h-1zM467 274h1v1h-1zM467 276h1v1h-1zM477 275h1v1h-1zM487 275h1v1h-1zM497 275h1v1h-1zM507 275h1v1h-1zM517 275h1v1h-1zM527 275h1v1h-1zM537 275h1v1h-1zM547 275h1v1h-1zM557 275h1v1h-1zM567 275h1v1h-1zM566 275h1v1h-1zM568 275h1v1h-1zM567 274h1v1h-1zM567 276h1v1h-1zM577 275h1v1h-1zM587 275h1v1h-1zM597 275h1v1h-1zM607 275h1v1h-1zM617 275h1v1h-1zM627 275h1v1h-1zM637 275h1v1h-1zM647 275h1v1h-1zM657 275h1v1h-1zM667 275h1v1h-1zM666 275h1v1h-1zM668 275h1v1h-1zM667 274h1v1h-1zM667 276h1v1h-1zM677 275h1v1h-1zM687 275h1v1h-1zM697 275h1v1h-1zM707 275h1v1h-1zM717 275h1v1h-1zM727 275h1v1h-1zM737 275h1v1h-1zM747 275h1v1h-1zM757 275h1v1h-1zM767 275h1v1h-1zM766 275h1v1h-1zM768 275h1v1h-1zM767 274h1v1h-1zM767 276h1v1h-1zM777 275h1v1h-1zM787 275h1v1h-1zM797 275h1v1h-1zM807 275h1v1h-1zM817 275h1v1h-1zM827 275h1v1h-1zM837 275h1v1h-1zM847 275h1v1h-1zM857 275h1v1h-1zM867 275h1v1h-1zM866 275h1v1h-1zM868 275h1v1h-1zM867 274h1v1h-1zM867 276h1v1h-1zM877 275h1v1h-1zM887 275h1v1h-1zM897 275h1v1h-1zM907 275h1v1h-1zM917 275h1v1h-1zM927 275h1v1h-1zM937 275h1v1h-1zM947 275h1v1h-1zM957 275h1v1h-1zM967 275h1v1h-1zM966 275h1v1h-1zM968 275h1v1h-1zM967 274h1v1h-1zM967 276h1v1h-1zM977 275h1v1h-1zM227 325h1v1h-1zM237 325h1v1h-1zM247 325h1v1h-1zM257 325h1v1h-1zM267 325h1v1h-1zM277 325h1v1h-1zM287 325h1v1h-1zM297 325h1v1h-1zM307 325h1v1h-1zM317 325h1v1h-1zM327 325h1v1h-1zM337 325h1v1h-1zM347 325h1v1h-1zM357 325h1v1h-1zM367 325h1v1h-1zM377 325h1v1h-1zM387 325h1v1h-1zM397 325h1v1h-1zM407 325h1v1h-1zM417 325h1v1h-1zM427 325h1v1h-1zM437 325h1v1h-1zM447 325h1v1h-1zM457 325h1v1h-1zM467 325h1v1h-1zM477 325h1v1h-1zM487 325h1v1h-1zM497 325h1v1h-1zM507 325h1v1h-1zM517 325h1v1h-1zM527 325h1v1h-1zM537 325h1v1h-1zM547 325h1v1h-1zM557 325h1v1h-1zM567 325h1v1h-1zM577 325h1v1h-1zM587 325h1v1h-1zM597 325h1v1h-1zM607 325h1v1h-1zM617 325h1v1h-1zM627 325h1v1h-1zM637 325h1v1h-1zM647 325h1v1h-1zM657 325h1v1h-1zM667 325h1v1h-1zM677 325h1v1h-1zM687 325h1v1h-1zM697 325h1v1h-1zM707 325h1v1h-1zM717 325h1v1h-1zM727 325h1v1h-1zM737 325h1v1h-1zM747 325h1v1h-1zM757 325h1v1h-1zM767 325h1v1h-1zM777 325h1v1h-1zM787 325h1v1h-1zM797 325h1v1h-1zM807 325h1v1h-1zM817 325h1v1h-1zM827 325h1v1h-1zM837 325h1v1h-1zM847 325h1v1h-1zM857 325h1v1h-1zM867 325h1v1h-1zM877 325h1v1h-1zM887 325h1v1h-1zM897 325h1v1h-1zM907 325h1v1h-1zM917 325h1v1h-1zM927 325h1v1h-1zM937 325h1v1h-1zM947 325h1v1h-1zM957 325h1v1h-1zM967 325h1v1h-1zM977 325h1v1h-1zM227 375h1v1h-1zM237 375h1v1h-1zM247 375h1v1h-1zM257 375h1v1h-1zM267 375h1v1h-1zM266 375h1v1h-1zM268 375h1v1h-1zM267 374h1v1h-1zM267 376h1v1h-1zM277 375h1v1h-1zM287 375h1v1h-1zM297 375h1v1h-1zM307 375h1v1h-1zM317 375h1v1h-1zM327 375h1v1h-1zM337 375h1v1h-1zM347 375h1v1h-1zM357 375h1v1h-1zM367 375h1v1h-1zM366 375h1v1h-1zM368 375h1v1h-1zM367 374h1v1h-1zM367 376h1v1h-1zM377 375h1v1h-1zM387 375h1v1h-1zM397 375h1v1h-1zM407 375h1v1h-1zM417 375h1v1h-1zM427 375h1v1h-1zM437 375h1v1h-1zM447 375h1v1h-1zM457 375h1v1h-1zM467 375h1v1h-1zM466 375h1v1h-1zM468 375h1v1h-1zM467 374h1v1h-1zM467 376h1v1h-1zM477 375h1v1h-1zM487 375h1v1h-1zM497 375h1v1h-1zM507 375h1v1h-1zM517 375h1v1h-1zM527 375h1v1h-1zM537 375h1v1h-1zM547 375h1v1h-1zM557 375h1v1h-1zM567 375h1v1h-1zM566 375h1v1h-1zM568 375h1v1h-1zM567 374h1v1h-1zM567 376h1v1h-1zM577 375h1v1h-1zM587 375h1v1h-1zM597 375h1v1h-1zM607 375h1v1h-1zM617 375h1v1h-1zM627 375h1v1h-1zM637 375h1v1h-1zM647 375h1v1h-1zM657 375h1v1h-1zM667 375h1v1h-1zM666 375h1v1h-1zM668 375h1v1h-1zM667 374h1v1h-1zM667 376h1v1h-1zM677 375h1v1h-1zM687 375h1v1h-1zM697 375h1v1h-1zM707 375h1v1h-1zM717 375h1v1h-1zM727 375h1v1h-1zM737 375h1v1h-1zM747 375h1v1h-1zM757 375h1v1h-1zM767 375h1v1h-1zM766 375h1v1h-1zM768 375h1v1h-1zM767 374h1v1h-1zM767 376h1v1h-1zM777 375h1v1h-1zM787 375h1v1h-1zM797 375h1v1h-1zM807 375h1v1h-1zM817 375h1v1h-1zM827 375h1v1h-1zM837 375h1v1h-1zM847 375h1v1h-1zM857 375h1v1h-1zM867 375h1v1h-1zM866 375h1v1h-1zM868 375h1v1h-1zM867 374h1v1h-1zM867 376h1v1h-1zM877 375h1v1h-1zM887 375h1v1h-1zM897 375h1v1h-1zM907 375h1v1h-1zM917 375h1v1h-1zM927 375h1v1h-1zM937 375h1v1h-1zM947 375h1v1h-1zM957 375h1v1h-1zM967 375h1v1h-1zM966 375h1v1h-1zM968 375h1v1h-1zM967 374h1v1h-1zM967 376h1v1h-1zM977 375h1v1h-1zM227 425h1v1h-1zM237 425h1v1h-1zM247 425h1v1h-1zM257 425h1v1h-1zM267 425h1v1h-1zM277 425h1v1h-1zM287 425h1v1h-1zM297 425h1v1h-1zM307 425h1v1h-1zM317 425h1v1h-1zM327 425h1v1h-1zM337 425h1v1h-1zM347 425h1v1h-1zM357 425h1v1h-1zM367 425h1v1h-1zM377 425h1v1h-1zM387 425h1v1h-1zM397 425h1v1h-1zM407 425h1v1h-1zM417 425h1v1h-1zM427 425h1v1h-1zM437 425h1v1h-1zM447 425h1v1h-1zM457 425h1v1h-1zM467 425h1v1h-1zM477 425h1v1h-1zM487 425h1v1h-1zM497 425h1v1h-1zM507 425h1v1h-1zM517 425h1v1h-1zM527 425h1v1h-1zM537 425h1v1h-1zM547 425h1v1h-1zM557 425h1v1h-1zM567 425h1v1h-1zM577 425h1v1h-1zM587 425h1v1h-1zM597 425h1v1h-1zM607 425h1v1h-1zM617 425h1v1h-1zM627 425h1v1h-1zM637 425h1v1h-1zM647 425h1v1h-1zM657 425h1v1h-1zM667 425h1v1h-1zM677 425h1v1h-1zM687 425h1v1h-1zM697 425h1v1h-1zM707 425h1v1h-1zM717 425h1v1h-1zM727 425h1v1h-1zM737 425h1v1h-1zM747 425h1v1h-1zM757 425h1v1h-1zM767 425h1v1h-1zM777 425h1v1h-1zM787 425h1v1h-1zM797 425h1v1h-1zM807 425h1v1h-1zM817 425h1v1h-1zM827 425h1v1h-1zM837 425h1v1h-1zM847 425h1v1h-1zM857 425h1v1h-1zM867 425h1v1h-1zM877 425h1v1h-1zM887 425h1v1h-1zM897 425h1v1h-1zM907 425h1v1h-1zM917 425h1v1h-1zM927 425h1v1h-1zM937 425h1v1h-1zM947 425h1v1h-1zM957 425h1v1h-1zM967 425h1v1h-1zM977 425h1v1h-1zM227 475h1v1h-1zM237 475h1v1h-1zM247 475h1v1h-1zM257 475h1v1h-1zM267 475h1v1h-1zM266 475h1v1h-1zM268 475h1v1h-1zM267 474h1v1h-1zM267 476h1v1h-1zM277 475h1v1h-1zM287 475h1v1h-1zM297 475h1v1h-1zM307 475h1v1h-1zM317 475h1v1h-1zM327 475h1v1h-1zM337 475h1v1h-1zM347 475h1v1h-1zM357 475h1v1h-1zM367 475h1v1h-1zM366 475h1v1h-1zM368 475h1v1h-1zM367 474h1v1h-1zM367 476h1v1h-1zM377 475h1v1h-1zM387 475h1v1h-1zM397 475h1v1h-1zM407 475h1v1h-1zM417 475h1v1h-1zM427 475h1v1h-1zM437 475h1v1h-1zM447 475h1v1h-1zM457 475h1v1h-1zM467 475h1v1h-1zM466 475h1v1h-1zM468 475h1v1h-1zM467 474h1v1h-1zM467 476h1v1h-1zM477 475h1v1h-1zM487 475h1v1h-1zM497 475h1v1h-1zM507 475h1v1h-1zM517 475h1v1h-1zM527 475h1v1h-1zM537 475h1v1h-1zM547 475h1v1h-1zM557 475h1v1h-1zM567 475h1v1h-1zM566 475h1v1h-1zM568 475h1v1h-1zM567 474h1v1h-1zM567 476h1v1h-1zM577 475h1v1h-1zM587 475h1v1h-1zM597 475h1v1h-1zM607 475h1v1h-1zM617 475h1v1h-1zM627 475h1v1h-1zM637 475h1v1h-1zM647 475h1v1h-1zM657 475h1v1h-1zM667 475h1v1h-1zM666 475h1v1h-1zM668 475h1v1h-1zM667 474h1v1h-1zM667 476h1v1h-1zM677 475h1v1h-1zM687 475h1v1h-1zM697 475h1v1h-1zM707 475h1v1h-1zM717 475h1v1h-1zM727 475h1v1h-1zM737 475h1v1h-1zM747 475h1v1h-1zM757 475h1v1h-1zM767 475h1v1h-1zM766 475h1v1h-1zM768 475h1v1h-1zM767 474h1v1h-1zM767 476h1v1h-1zM777 475h1v1h-1zM787 475h1v1h-1zM797 475h1v1h-1zM807 475h1v1h-1zM817 475h1v1h-1zM827 475h1v1h-1zM837 475h1v1h-1zM847 475h1v1h-1zM857 475h1v1h-1zM867 475h1v1h-1zM866 475h1v1h-1zM868 475h1v1h-1zM867 474h1v1h-1zM867 476h1v1h-1zM877 475h1v1h-1zM887 475h1v1h-1zM897 475h1v1h-1zM907 475h1v1h-1zM917 475h1v1h-1zM927 475h1v1h-1zM937 475h1v1h-1zM947 475h1v1h-1zM957 475h1v1h-1zM967 475h1v1h-1zM966 475h1v1h-1zM968 475h1v1h-1zM967 474h1v1h-1zM967 476h1v1h-1zM977 475h1v1h-1zM227 525h1v1h-1zM237 525h1v1h-1zM247 525h1v1h-1zM257 525h1v1h-1zM267 525h1v1h-1zM277 525h1v1h-1zM287 525h1v1h-1zM297 525h1v1h-1zM307 525h1v1h-1zM317 525h1v1h-1zM327 525h1v1h-1zM337 525h1v1h-1zM347 525h1v1h-1zM357 525h1v1h-1zM367 525h1v1h-1zM377 525h1v1h-1zM387 525h1v1h-1zM397 525h1v1h-1zM407 525h1v1h-1zM417 525h1v1h-1zM427 525h1v1h-1zM437 525h1v1h-1zM447 525h1v1h-1zM457 525h1v1h-1zM467 525h1v1h-1zM477 525h1v1h-1zM487 525h1v1h-1zM497 525h1v1h-1zM507 525h1v1h-1zM517 525h1v1h-1zM527 525h1v1h-1zM537 525h1v1h-1zM547 525h1v1h-1zM557 525h1v1h-1zM567 525h1v1h-1zM577 525h1v1h-1zM587 525h1v1h-1zM597 525h1v1h-1zM607 525h1v1h-1zM617 525h1v1h-1zM627 525h1v1h-1zM637 525h1v1h-1zM647 525h1v1h-1zM657 525h1v1h-1zM667 525h1v1h-1zM677 525h1v1h-1zM687 525h1v1h-1zM697 525h1v1h-1zM707 525h1v1h-1zM717 525h1v1h-1zM727 525h1v1h-1zM737 525h1v1h-1zM747 525h1v1h-1zM757 525h1v1h-1zM767 525h1v1h-1zM777 525h1v1h-1zM787 525h1v1h-1zM797 525h1v1h-1zM807 525h1v1h-1zM817 525h1v1h-1zM827 525h1v1h-1zM837 525h1v1h-1zM847 525h1v1h-1zM857 525h1v1h-1zM867 525h1v1h-1zM877 525h1v1h-1zM887 525h1v1h-1zM897 525h1v1h-1zM907 525h1v1h-1zM917 525h1v1h-1zM927 525h1v1h-1zM937 525h1v1h-1zM947 525h1v1h-1zM957 525h1v1h-1zM967 525h1v1h-1zM977 525h1v1h-1zM227 575h1v1h-1zM237 575h1v1h-1zM247 575h1v1h-1zM257 575h1v1h-1zM267 575h1v1h-1zM266 575h1v1h-1zM268 575h1v1h-1zM267 574h1v1h-1zM267 576h1v1h-1zM277 575h1v1h-1zM287 575h1v1h-1zM297 575h1v1h-1zM307 575h1v1h-1zM317 575h1v1h-1zM327 575h1v1h-1zM337 575h1v1h-1zM347 575h1v1h-1zM357 575h1v1h-1zM367 575h1v1h-1zM366 575h1v1h-1zM368 575h1v1h-1zM367 574h1v1h-1zM367 576h1v1h-1zM377 575h1v1h-1zM387 575h1v1h-1zM397 575h1v1h-1zM407 575h1v1h-1zM417 575h1v1h-1zM427 575h1v1h-1zM437 575h1v1h-1zM447 575h1v1h-1zM457 575h1v1h-1zM467 575h1v1h-1zM466 575h1v1h-1zM468 575h1v1h-1zM467 574h1v1h-1zM467 576h1v1h-1zM477 575h1v1h-1zM487 575h1v1h-1zM497 575h1v1h-1zM507 575h1v1h-1zM517 575h1v1h-1zM527 575h1v1h-1zM537 575h1v1h-1zM547 575h1v1h-1zM557 575h1v1h-1zM567 575h1v1h-1zM566 575h1v1h-1zM568 575h1v1h-1zM567 574h1v1h-1zM567 576h1v1h-1zM577 575h1v1h-1zM587 575h1v1h-1zM597 575h1v1h-1zM607 575h1v1h-1zM617 575h1v1h-1zM627 575h1v1h-1zM637 575h1v1h-1zM647 575h1v1h-1zM657 575h1v1h-1zM667 575h1v1h-1zM666 575h1v1h-1zM668 575h1v1h-1zM667 574h1v1h-1zM667 576h1v1h-1zM677 575h1v1h-1zM687 575h1v1h-1zM697 575h1v1h-1zM707 575h1v1h-1zM717 575h1v1h-1zM727 575h1v1h-1zM737 575h1v1h-1zM747 575h1v1h-1zM757 575h1v1h-1zM767 575h1v1h-1zM766 575h1v1h-1zM768 575h1v1h-1zM767 574h1v1h-1zM767 576h1v1h-1zM777 575h1v1h-1zM787 575h1v1h-1zM797 575h1v1h-1zM807 575h1v1h-1zM817 575h1v1h-1zM827 575h1v1h-1zM837 575h1v1h-1zM847 575h1v1h-1zM857 575h1v1h-1zM867 575h1v1h-1zM866 575h1v1h-1zM868 575h1v1h-1zM867 574h1v1h-1zM867 576h1v1h-1zM877 575h1v1h-1zM887 575h1v1h-1zM897 575h1v1h-1zM907 575h1v1h-1zM917 575h1v1h-1zM927 575h1v1h-1zM937 575h1v1h-1zM947 575h1v1h-1zM957 575h1v1h-1zM967 575h1v1h-1zM966 575h1v1h-1zM968 575h1v1h-1zM967 574h1v1h-1zM967 576h1v1h-1zM977 575h1v1h-1zM227 625h1v1h-1zM237 625h1v1h-1zM247 625h1v1h-1zM257 625h1v1h-1zM267 625h1v1h-1zM277 625h1v1h-1zM287 625h1v1h-1zM297 625h1v1h-1zM307 625h1v1h-1zM317 625h1v1h-1zM327 625h1v1h-1zM337 625h1v1h-1zM347 625h1v1h-1zM357 625h1v1h-1zM367 625h1v1h-1zM377 625h1v1h-1zM387 625h1v1h-1zM397 625h1v1h-1zM407 625h1v1h-1zM417 625h1v1h-1zM427 625h1v1h-1zM437 625h1v1h-1zM447 625h1v1h-1zM457 625h1v1h-1zM467 625h1v1h-1zM477 625h1v1h-1zM487 625h1v1h-1zM497 625h1v1h-1zM507 625h1v1h-1zM517 625h1v1h-1zM527 625h1v1h-1zM537 625h1v1h-1zM547 625h1v1h-1zM557 625h1v1h-1zM567 625h1v1h-1zM577 625h1v1h-1zM587 625h1v1h-1zM597 625h1v1h-1zM607 625h1v1h-1zM617 625h1v1h-1zM627 625h1v1h-1zM637 625h1v1h-1zM647 625h1v1h-1zM657 625h1v1h-1zM667 625h1v1h-1zM677 625h1v1h-1zM687 625h1v1h-1zM697 625h1v1h-1zM707 625h1v1h-1zM717 625h1v1h-1zM727 625h1v1h-1zM737 625h1v1h-1zM747 625h1v1h-1zM757 625h1v1h-1zM767 625h1v1h-1zM777 625h1v1h-1zM787 625h1v1h-1zM797 625h1v1h-1zM807 625h1v1h-1zM817 625h1v1h-1zM827 625h1v1h-1zM837 625h1v1h-1zM847 625h1v1h-1zM857 625h1v1h-1zM867 625h1v1h-1zM877 625h1v1h-1zM887 625h1v1h-1zM897 625h1v1h-1zM907 625h1v1h-1zM917 625h1v1h-1zM927 625h1v1h-1zM937 625h1v1h-1zM947 625h1v1h-1zM957 625h1v1h-1zM967 625h1v1h-1zM977 625h1v1h-1zM227 675h1v1h-1zM237 675h1v1h-1zM247 675h1v1h-1zM257 675h1v1h-1zM267 675h1v1h-1zM266 675h1v1h-1zM268 675h1v1h-1zM267 674h1v1h-1zM267 676h1v1h-1zM277 675h1v1h-1zM287 675h1v1h-1zM297 675h1v1h-1zM307 675h1v1h-1zM317 675h1v1h-1zM327 675h1v1h-1zM337 675h1v1h-1zM347 675h1v1h-1zM357 675h1v1h-1zM367 675h1v1h-1zM366 675h1v1h-1zM368 675h1v1h-1zM367 674h1v1h-1zM367 676h1v1h-1zM377 675h1v1h-1zM387 675h1v1h-1zM397 675h1v1h-1zM407 675h1v1h-1zM417 675h1v1h-1zM427 675h1v1h-1zM437 675h1v1h-1zM447 675h1v1h-1zM457 675h1v1h-1zM467 675h1v1h-1zM466 675h1v1h-1zM468 675h1v1h-1zM467 674h1v1h-1zM467 676h1v1h-1zM477 675h1v1h-1zM487 675h1v1h-1zM497 675h1v1h-1zM507 675h1v1h-1zM517 675h1v1h-1zM527 675h1v1h-1zM537 675h1v1h-1zM547 675h1v1h-1zM557 675h1v1h-1zM567 675h1v1h-1zM566 675h1v1h-1zM568 675h1v1h-1zM567 674h1v1h-1zM567 676h1v1h-1zM577 675h1v1h-1zM587 675h1v1h-1zM597 675h1v1h-1zM607 675h1v1h-1zM617 675h1v1h-1zM627 675h1v1h-1zM637 675h1v1h-1zM647 675h1v1h-1zM657 675h1v1h-1zM667 675h1v1h-1zM666 675h1v1h-1zM668 675h1v1h-1zM667 674h1v1h-1zM667 676h1v1h-1zM677 675h1v1h-1zM687 675h1v1h-1zM697 675h1v1h-1zM707 675h1v1h-1zM717 675h1v1h-1zM727 675h1v1h-1zM737 675h1v1h-1zM747 675h1v1h-1zM757 675h1v1h-1zM767 675h1v1h-1zM766 675h1v1h-1zM768 675h1v1h-1zM767 674h1v1h-1zM767 676h1v1h-1zM777 675h1v1h-1zM787 675h1v1h-1zM797 675h1v1h-1zM807 675h1v1h-1zM817 675h1v1h-1zM827 675h1v1h-1zM837 675h1v1h-1zM847 675h1v1h-1zM857 675h1v1h-1zM867 675h1v1h-1zM866 675h1v1h-1zM868 675h1v1h-1zM867 674h1v1h-1zM867 676h1v1h-1zM877 675h1v1h-1zM887 675h1v1h-1zM897 675h1v1h-1zM907 675h1v1h-1zM917 675h1v1h-1zM927 675h1v1h-1zM937 675h1v1h-1zM947 675h1v1h-1zM957 675h1v1h-1zM967 675h1v1h-1zM966 675h1v1h-1zM968 675h1v1h-1zM967 674h1v1h-1zM967 676h1v1h-1zM977 675h1v1h-1zM227 725h1v1h-1zM237 725h1v1h-1zM247 725h1v1h-1zM257 725h1v1h-1zM267 725h1v1h-1zM277 725h1v1h-1zM287 725h1v1h-1zM297 725h1v1h-1zM307 725h1v1h-1zM317 725h1v1h-1zM327 725h1v1h-1zM337 725h1v1h-1zM347 725h1v1h-1zM357 725h1v1h-1zM367 725h1v1h-1zM377 725h1v1h-1zM387 725h1v1h-1zM397 725h1v1h-1zM407 725h1v1h-1zM417 725h1v1h-1zM427 725h1v1h-1zM437 725h1v1h-1zM447 725h1v1h-1zM457 725h1v1h-1zM467 725h1v1h-1zM477 725h1v1h-1zM487 725h1v1h-1zM497 725h1v1h-1zM507 725h1v1h-1zM517 725h1v1h-1zM527 725h1v1h-1zM537 725h1v1h-1zM547 725h1v1h-1zM557 725h1v1h-1zM567 725h1v1h-1zM577 725h1v1h-1zM587 725h1v1h-1zM597 725h1v1h-1zM607 725h1v1h-1zM617 725h1v1h-1zM627 725h1v1h-1zM637 725h1v1h-1zM647 725h1v1h-1zM657 725h1v1h-1zM667 725h1v1h-1zM677 725h1v1h-1zM687 725h1v1h-1zM697 725h1v1h-1zM707 725h1v1h-1zM717 725h1v1h-1zM727 725h1v1h-1zM737 725h1v1h-1zM747 725h1v1h-1zM757 725h1v1h-1zM767 725h1v1h-1zM777 725h1v1h-1zM787 725h1v1h-1zM797 725h1v1h-1zM807 725h1v1h-1zM817 725h1v1h-1zM827 725h1v1h-1zM837 725h1v1h-1zM847 725h1v1h-1zM857 725h1v1h-1zM867 725h1v1h-1zM877 725h1v1h-1zM887 725h1v1h-1zM897 725h1v1h-1zM907 725h1v1h-1zM917 725h1v1h-1zM927 725h1v1h-1zM937 725h1v1h-1zM947 725h1v1h-1zM957 725h1v1h-1zM967 725h1v1h-1zM977 725h1v1h-1z"/>
<rect x="226.5" y="80.5" width="756" height="665" rx="8" ry="8" fill="none" stroke="#3a3a3a" stroke-width="1.2"/>
<path d="M226.5 102.5H494.5L503 94.5V80.5" fill="none" stroke="#3a3a3a" stroke-width="1.2"/>
<text x="232" y="95" font-family="Liberation Sans" font-weight="bold" font-size="12" fill="#000" textLength="135" lengthAdjust="spacingAndGlyphs">activity Activity Diagram</text>
<text x="373.5" y="95" font-family="Liberation Sans" font-size="12" fill="#000" textLength="49">Get Title [</text>
<text x="447.5" y="95" font-family="Liberation Sans" font-size="12" fill="#000" textLength="51">Get Title ]</text>
<use href="#adiag" x="427" y="83" width="16" height="16"/>
<rect x="701.5" y="125.5" width="281.5" height="193" fill="none" stroke="#3e3e3e" stroke-width="1"/>
<rect x="705.5" y="129.5" width="99" height="23.0" rx="2" fill="none" stroke="#3e3e3e" stroke-width="1.1"/>
<rect x="807.5" y="129.5" width="172" height="23.0" rx="2" fill="none" stroke="#3e3e3e" stroke-width="1.1"/>
<text x="709" y="145.5" font-family="Liberation Sans" font-size="12" fill="#000">Diagram name</text>
<text x="811" y="145.5" font-family="Liberation Sans" font-size="12" fill="#000">Get Title</text>
<rect x="705.5" y="155.5" width="99" height="23.0" rx="2" fill="none" stroke="#3e3e3e" stroke-width="1.1"/>
<rect x="807.5" y="155.5" width="172" height="23.0" rx="2" fill="none" stroke="#3e3e3e" stroke-width="1.1"/>
<text x="709" y="171.5" font-family="Liberation Sans" font-size="12" fill="#000">Author</text>
<rect x="705.5" y="181.5" width="99" height="23.0" rx="2" fill="none" stroke="#3e3e3e" stroke-width="1.1"/>
<rect x="807.5" y="181.5" width="172" height="23.0" rx="2" fill="none" stroke="#3e3e3e" stroke-width="1.1"/>
<text x="709" y="197.5" font-family="Liberation Sans" font-size="12" fill="#000">Creation date</text>
<text x="811" y="197.5" font-family="Liberation Sans" font-size="12" fill="#000">6/21/07 4:54 PM</text>
<rect x="705.5" y="207.5" width="99" height="23.0" rx="2" fill="none" stroke="#3e3e3e" stroke-width="1.1"/>
<rect x="807.5" y="207.5" width="172" height="23.0" rx="2" fill="none" stroke="#3e3e3e" stroke-width="1.1"/>
<text x="709" y="223.5" font-family="Liberation Sans" font-size="12" fill="#000">Modification date</text>
<text x="811" y="223.5" font-family="Liberation Sans" font-size="12" fill="#000">7/5/16 2:57 PM</text>
<rect x="705.5" y="233.5" width="99" height="39.0" rx="2" fill="none" stroke="#3e3e3e" stroke-width="1.1"/>
<rect x="807.5" y="233.5" width="172" height="39.0" rx="2" fill="none" stroke="#3e3e3e" stroke-width="1.1"/>
<text x="709" y="257.5" font-family="Liberation Sans" font-size="12" fill="#000">Documentation</text>
<text x="811" y="249.5" font-family="Liberation Sans" font-size="12" fill="#000">- add documentation via</text>
<text x="811" y="265.5" font-family="Liberation Sans" font-size="12" fill="#000">diagram specification -</text>
<rect x="705.5" y="275.5" width="99" height="39.0" rx="2" fill="none" stroke="#3e3e3e" stroke-width="1.1"/>
<rect x="807.5" y="275.5" width="172" height="39.0" rx="2" fill="none" stroke="#3e3e3e" stroke-width="1.1"/>
<text x="709" y="299.5" font-family="Liberation Sans" font-size="12" fill="#000">TODO</text>
<text x="811" y="291.5" font-family="Liberation Sans" font-size="12" fill="#000">- add To Do via diagram</text>
<text x="811" y="307.5" font-family="Liberation Sans" font-size="12" fill="#000">specification -</text>
<path d="M572.5 287V374" stroke="#3a3a3a" stroke-width="2" fill="none"/>
<path d="M567 365L572.5 375L578 365" stroke="#3a3a3a" stroke-width="2" fill="none"/>
<path d="M567 658L572.5 668L578 658" stroke="#3a3a3a" stroke-width="2" fill="none"/>
<path d="M281 385.5H516" stroke="#3a3a3a" stroke-width="1" fill="none"/>
<path d="M509 380.5L517 385.5L509 390.5" stroke="#3a3a3a" stroke-width="1" fill="none"/>
<circle cx="572.3" cy="276.3" r="11.3" fill="#3f3f3f"/>
<rect x="520" y="378" width="83" height="25" rx="10.5" fill="#a8a8a8" filter="url(#sh)"/>
<rect x="517.5" y="375.5" width="82" height="24.5" rx="10.5" fill="#e3e2c2" stroke="#3a3a3a" stroke-width="1.5"/>
<text x="558.5" y="390" text-anchor="middle" font-family="Liberation Sans" font-weight="bold" font-size="12" fill="#000" textLength="46">Get Title</text>
<path d="M572.5 400V667" stroke="#3a3a3a" stroke-width="2" fill="none"/>
<circle cx="574.5" cy="681.5" r="11.4" fill="#b0b0b0" filter="url(#sh)"/>
<circle cx="572.5" cy="679.4" r="11" fill="#fff" stroke="#3a3a3a" stroke-width="1.2"/>
<circle cx="572.5" cy="679.3" r="6.4" fill="#3f3f3f"/>
<rect x="172.5" y="375.5" width="108" height="24" fill="#ccccff" stroke="#3a3a3a" stroke-width="1"/>
<text x="178" y="390" font-family="Liberation Sans" font-weight="bold" font-size="12" fill="#000" textLength="94">inputTitle : String</text>
<rect x="924.5" y="375.5" width="116" height="24" fill="#ccccff" stroke="#3a3a3a" stroke-width="1"/>
<text x="930" y="390" font-family="Liberation Sans" font-weight="bold" font-size="12" fill="#000" textLength="103">outputTitle : String</text>
</svg>
<svg class="abs" style="left:0;top:0" width="1062" height="774" viewBox="0 0 1062 774">
<defs>
<linearGradient id="gb" x1="0" y1="0" x2="1" y2="1"><stop offset="0" stop-color="#f4f8ff"/><stop offset="1" stop-color="#8fa6d0"/></linearGradient>
<linearGradient id="gy" x1="0" y1="0" x2="1" y2="1"><stop offset="0" stop-color="#f6f6e4"/><stop offset="1" stop-color="#cdcca0"/></linearGradient>
<linearGradient id="gf" x1="0" y1="0" x2="0" y2="1"><stop offset="0" stop-color="#fffff0"/><stop offset="1" stop-color="#f0e88a"/></linearGradient>
<linearGradient id="gs" x1="0" y1="0" x2="1" y2="0"><stop offset="0" stop-color="#555"/><stop offset=".5" stop-color="#ddd"/><stop offset="1" stop-color="#555"/></linearGradient>
<symbol id="adiag" viewBox="0 0 16 16">
<path d="M0.5 0.5H12L15.5 4V15.5H0.5Z" fill="#dedede" stroke="#6e6e6e"/>
<path d="M11.5 0.5V4.5H15.5" fill="#fff" stroke="#6e6e6e"/>
<rect x="2" y="3" width="3" height="3" fill="#333"/>
<path d="M5 4.5H7.5" stroke="#333"/>
<rect x="7.5" y="2.5" width="5" height="4" rx="1.5" fill="url(#gb)" stroke="#333"/>
<path d="M10.5 6.5V11M9 9.5H12" stroke="#333"/>
<rect x="3" y="11" width="9.5" height="2" fill="#333"/>
</symbol>
<symbol id="ucdiag" viewBox="0 0 16 16">
<path d="M0.5 0.5H12L15.5 4V15.5H0.5Z" fill="#dcdcdc" stroke="#6e6e6e"/>
<path d="M11.5 0.5V4.5H15.5" fill="#fff" stroke="#6e6e6e"/>
<ellipse cx="4.5" cy="4.3" rx="2.3" ry="1.8" fill="url(#gb)" stroke="#333"/>
<path d="M2 7.5H7M4.5 6.5V8L2 11M4.5 8L7 11M7 7.5L10 10.5" stroke="#333" fill="none"/>
<ellipse cx="11.5" cy="11.8" rx="3.3" ry="2" fill="url(#gb)" stroke="#333"/>
</symbol>
<symbol id="folder" viewBox="0 0 14 11">
<path d="M0.5 1.5H5L6 2.5H13.5V10.5H0.5Z" fill="url(#gf)" stroke="#555"/>
<path d="M0.5 1.5H5V2.5H0.5Z" fill="#e8c060"/>
</symbol>
</defs>
<use href="#adiag" x="16" y="5" width="16" height="16"/>
<path d="M97 10.5L103.5 17M103.5 10.5L97 17" stroke="#000" stroke-width="1.6"/>
<use href="#ucdiag" x="116" y="5" width="16" height="16"/>
<use href="#ucdiag" x="266" y="5" width="16" height="16"/>
<path d="M11 37L18.5 29.3L22 32.8L20 34.1H25V39.6H20L22 41.2L18.5 44.7Z" fill="#8c8c8c"/>
<path d="M47 37L39.5 29.3L36 32.8L38 34.1H33V39.6H38L36 41.2L39.5 44.7Z" fill="#8c8c8c"/>
<rect x="63" y="30" width="3" height="1" fill="#b4b4b4"/><rect x="63" y="31" width="3" height="1" fill="#fdfdfd"/><rect x="63" y="32" width="3" height="1" fill="#b4b4b4"/><rect x="63" y="33" width="3" height="1" fill="#fdfdfd"/><rect x="63" y="34" width="3" height="1" fill="#b4b4b4"/><rect x="63" y="35" width="3" height="1" fill="#fdfdfd"/><rect x="63" y="36" width="3" height="1" fill="#b4b4b4"/><rect x="63" y="37" width="3" height="1" fill="#fdfdfd"/><rect x="63" y="38" width="3" height="1" fill="#b4b4b4"/><rect x="63" y="39" width="3" height="1" fill="#fdfdfd"/><rect x="63" y="40" width="3" height="1" fill="#b4b4b4"/><rect x="63" y="41" width="3" height="1" fill="#fdfdfd"/><rect x="63" y="42" width="3" height="1" fill="#b4b4b4"/><rect x="63" y="43" width="3" height="1" fill="#fdfdfd"/><rect x="63" y="44" width="3" height="1" fill="#b4b4b4"/><rect x="63" y="45" width="3" height="1" fill="#fdfdfd"/>
<rect x="262" y="30" width="3" height="1" fill="#b4b4b4"/><rect x="262" y="31" width="3" height="1" fill="#fdfdfd"/><rect x="262" y="32" width="3" height="1" fill="#b4b4b4"/><rect x="262" y="33" width="3" height="1" fill="#fdfdfd"/><rect x="262" y="34" width="3" height="1" fill="#b4b4b4"/><rect x="262" y="35" width="3" height="1" fill="#fdfdfd"/><rect x="262" y="36" width="3" height="1" fill="#b4b4b4"/><rect x="262" y="37" width="3" height="1" fill="#fdfdfd"/><rect x="262" y="38" width="3" height="1" fill="#b4b4b4"/><rect x="262" y="39" width="3" height="1" fill="#fdfdfd"/><rect x="262" y="40" width="3" height="1" fill="#b4b4b4"/><rect x="262" y="41" width="3" height="1" fill="#fdfdfd"/><rect x="262" y="42" width="3" height="1" fill="#b4b4b4"/><rect x="262" y="43" width="3" height="1" fill="#fdfdfd"/><rect x="262" y="44" width="3" height="1" fill="#b4b4b4"/><rect x="262" y="45" width="3" height="1" fill="#fdfdfd"/>
<rect x="385" y="30" width="3" height="1" fill="#b4b4b4"/><rect x="385" y="31" width="3" height="1" fill="#fdfdfd"/><rect x="385" y="32" width="3" height="1" fill="#b4b4b4"/><rect x="385" y="33" width="3" height="1" fill="#fdfdfd"/><rect x="385" y="34" width="3" height="1" fill="#b4b4b4"/><rect x="385" y="35" width="3" height="1" fill="#fdfdfd"/><rect x="385" y="36" width="3" height="1" fill="#b4b4b4"/><rect x="385" y="37" width="3" height="1" fill="#fdfdfd"/><rect x="385" y="38" width="3" height="1" fill="#b4b4b4"/><rect x="385" y="39" width="3" height="1" fill="#fdfdfd"/><rect x="385" y="40" width="3" height="1" fill="#b4b4b4"/><rect x="385" y="41" width="3" height="1" fill="#fdfdfd"/><rect x="385" y="42" width="3" height="1" fill="#b4b4b4"/><rect x="385" y="43" width="3" height="1" fill="#fdfdfd"/><rect x="385" y="44" width="3" height="1" fill="#b4b4b4"/><rect x="385" y="45" width="3" height="1" fill="#fdfdfd"/>
<rect x="508" y="30" width="3" height="1" fill="#b4b4b4"/><rect x="508" y="31" width="3" height="1" fill="#fdfdfd"/><rect x="508" y="32" width="3" height="1" fill="#b4b4b4"/><rect x="508" y="33" width="3" height="1" fill="#fdfdfd"/><rect x="508" y="34" width="3" height="1" fill="#b4b4b4"/><rect x="508" y="35" width="3" height="1" fill="#fdfdfd"/><rect x="508" y="36" width="3" height="1" fill="#b4b4b4"/><rect x="508" y="37" width="3" height="1" fill="#fdfdfd"/><rect x="508" y="38" width="3" height="1" fill="#b4b4b4"/><rect x="508" y="39" width="3" height="1" fill="#fdfdfd"/><rect x="508" y="40" width="3" height="1" fill="#b4b4b4"/><rect x="508" y="41" width="3" height="1" fill="#fdfdfd"/><rect x="508" y="42" width="3" height="1" fill="#b4b4b4"/><rect x="508" y="43" width="3" height="1" fill="#fdfdfd"/><rect x="508" y="44" width="3" height="1" fill="#b4b4b4"/><rect x="508" y="45" width="3" height="1" fill="#fdfdfd"/>
<rect x="960" y="30" width="3" height="1" fill="#b4b4b4"/><rect x="960" y="31" width="3" height="1" fill="#fdfdfd"/><rect x="960" y="32" width="3" height="1" fill="#b4b4b4"/><rect x="960" y="33" width="3" height="1" fill="#fdfdfd"/><rect x="960" y="34" width="3" height="1" fill="#b4b4b4"/><rect x="960" y="35" width="3" height="1" fill="#fdfdfd"/><rect x="960" y="36" width="3" height="1" fill="#b4b4b4"/><rect x="960" y="37" width="3" height="1" fill="#fdfdfd"/><rect x="960" y="38" width="3" height="1" fill="#b4b4b4"/><rect x="960" y="39" width="3" height="1" fill="#fdfdfd"/><rect x="960" y="40" width="3" height="1" fill="#b4b4b4"/><rect x="960" y="41" width="3" height="1" fill="#fdfdfd"/><rect x="960" y="42" width="3" height="1" fill="#b4b4b4"/><rect x="960" y="43" width="3" height="1" fill="#fdfdfd"/><rect x="960" y="44" width="3" height="1" fill="#b4b4b4"/><rect x="960" y="45" width="3" height="1" fill="#fdfdfd"/>
<rect x="58" y="55" width="3" height="1" fill="#b4b4b4"/><rect x="58" y="56" width="3" height="1" fill="#fdfdfd"/><rect x="58" y="57" width="3" height="1" fill="#b4b4b4"/><rect x="58" y="58" width="3" height="1" fill="#fdfdfd"/><rect x="58" y="59" width="3" height="1" fill="#b4b4b4"/><rect x="58" y="60" width="3" height="1" fill="#fdfdfd"/><rect x="58" y="61" width="3" height="1" fill="#b4b4b4"/><rect x="58" y="62" width="3" height="1" fill="#fdfdfd"/><rect x="58" y="63" width="3" height="1" fill="#b4b4b4"/><rect x="58" y="64" width="3" height="1" fill="#fdfdfd"/><rect x="58" y="65" width="3" height="1" fill="#b4b4b4"/><rect x="58" y="66" width="3" height="1" fill="#fdfdfd"/><rect x="58" y="67" width="3" height="1" fill="#b4b4b4"/><rect x="58" y="68" width="3" height="1" fill="#fdfdfd"/><rect x="58" y="69" width="3" height="1" fill="#b4b4b4"/><rect x="58" y="70" width="3" height="1" fill="#fdfdfd"/>
<g fill="none" stroke="#404040"><rect x="77.5" y="29.5" width="2" height="2"/><rect x="75.5" y="35.5" width="2" height="2"/><rect x="80.5" y="35.5" width="2" height="2"/><rect x="71.5" y="41.5" width="2" height="2"/><rect x="75.5" y="41.5" width="2" height="2"/><rect x="80.5" y="41.5" width="2" height="2"/><rect x="84.5" y="41.5" width="2" height="2"/><path d="M78.5 32V34.5M76.5 35V34.5H81.5V35M76.5 38V41M81.5 38V41M75 38L72.5 41M82.5 38L85.5 41"/></g>
<path d="M96.5 36H102.5L99.5 39Z" fill="#000"/><path d="M134.5 36H140.5L137.5 39Z" fill="#000"/>
<path d="M115.5 31V44M109 37.5H122M114 33L115.5 31.5L117 33M114 42L115.5 43.5L117 42M111 36L109.5 37.5L111 39" stroke="#404040" fill="none"/>
<rect x="113.5" y="35.5" width="4" height="4" fill="#f0a040" stroke="#404040"/><rect x="118.5" y="39.5" width="4" height="4" fill="#40b060" stroke="#404040"/>
<rect x="114.5" y="36.5" width="1.5" height="1.5" fill="#fff"/><rect x="119.5" y="40.5" width="1.5" height="1.5" fill="#fff"/>
<g fill="#8c8c8c"><rect x="149" y="40" width="3" height="3"/><rect x="158" y="31" width="3" height="3"/><rect x="171" y="31" width="3" height="3"/><rect x="180" y="31" width="3" height="3"/><rect x="171" y="40" width="3" height="3"/><rect x="193" y="32" width="3" height="3"/><rect x="202" y="32" width="3" height="3"/><rect x="193" y="41" width="3" height="3"/><rect x="215" y="41" width="3" height="3"/><rect x="226" y="31" width="3" height="3"/><rect x="236" y="32" width="4" height="1.5"/><rect x="247" y="31" width="3" height="3"/><rect x="237" y="41" width="3" height="3"/><rect x="246" y="41" width="5" height="1.5"/></g>
<path d="M151.5 40.5L158.5 33.5M174 32.5H180M172.5 34V40M196 33.5H202M195 41.5L203 34.5M216.5 41Q216.5 32.5 226 32.5M239 41.5L248 33.5" stroke="#8c8c8c" fill="none"/>
<rect x="271.5" y="34.5" width="9" height="5" fill="#9a9a9a" stroke="#7a7a7a"/><path d="M283.5 30V33.5M281.5 32L283.5 34L285.5 32M283.5 44V40.5M281.5 42L283.5 40L285.5 42" stroke="#8c8c8c" fill="none"/>
<rect x="293.5" y="31.5" width="9" height="11" fill="#9a9a9a" stroke="#7a7a7a"/><path d="M294 36.5H302M294 38.5H302M294 40.5H302" stroke="#c8c8c8"/><path d="M305.5 31V43M303.5 33L305.5 31L307.5 33M303.5 41L305.5 43L307.5 41" stroke="#8c8c8c" fill="none"/>
<rect x="316.5" y="32.5" width="11" height="8" fill="#9a9a9a" stroke="#7a7a7a"/><path d="M318 34.5h2M321 34.5h2M324 34.5h2M318 36.5h2M321 36.5h2M324 36.5h2M318 38.5h2M321 38.5h2M324 38.5h2" stroke="#c0c0c0"/>
<rect x="338.5" y="31.5" width="11" height="10" fill="#929292" stroke="#7a7a7a"/>
<rect x="360.5" y="32.5" width="11" height="8" fill="#9a9a9a" stroke="#7a7a7a"/><rect x="366.5" y="38.5" width="3" height="3" fill="#9a9a9a" stroke="#7a7a7a"/>
<g stroke="#8c8c8c" fill="none" stroke-width="1.2"><circle cx="396" cy="34" r="2.5"/><rect x="396.5" y="40" width="2.5" height="4.5" rx="1"/><path d="M398 35.5L408 30.5M398.5 37H408.5M398 36L397.5 40"/></g>
<path d="M416.5 31.5H423L425 33.5V44.5H416.5Z" fill="#9a9a9a" stroke="#888"/><path d="M420.5 30.5H427L430.5 34V42.5H425" fill="#9a9a9a" stroke="#888"/>
<rect x="439.5" y="32.5" width="11" height="12" rx="1.5" fill="#fafafa" stroke="#222"/><rect x="443" y="30.5" width="4" height="3" fill="#2d6db5"/><path d="M441 40V43" stroke="#bbb"/>
<path d="M461.5 32.5H473.5V34.5H461.5ZM462.5 35H472.5L471.5 44.5H463.5Z" fill="#8c8c8c"/><path d="M465.5 36.5V43M467.5 36.5V43M469.5 36.5V43" stroke="#a8a8a8"/><path d="M466 32V30.5H469V32" stroke="#8c8c8c" fill="none"/>
<rect x="482.5" y="30" width="8" height="9" fill="#9a9a9a"/><path d="M484 33H490M484 36H490" stroke="#b0b0b0"/><path d="M486 35.5H496V37.5H486Z" fill="#8c8c8c"/><path d="M487 38H495L494.5 44.5H487.5Z" fill="#8c8c8c"/><path d="M489.5 39V43.5M491.5 39V43.5" stroke="#a8a8a8"/>
<path d="M516 38L522 31L531 38L526 43H518Z" fill="#9a9a9a"/><rect x="518" y="39" width="14" height="6" fill="#8c8c8c" stroke="#777"/><circle cx="521" cy="31" r="1.5" fill="none" stroke="#777"/>
<path d="M559 40L567 31.5L570 34.5L562 42Z" fill="#8c8c8c"/><path d="M556.5 42.5L559 40L562 42H569V45H556.5Z" fill="#8c8c8c"/>
<path d="M596 41L600.5 30.5L605 41Z" fill="none" stroke="#8c8c8c" stroke-width="2"/><rect x="594.5" y="41" width="12" height="4" fill="#8c8c8c"/>
<path d="M541.5 36H547.5L544.5 38.5Z" fill="#888"/><path d="M580 36H586L583 38.5Z" fill="#888"/><path d="M617.5 36H623.5L620.5 38.5Z" fill="#888"/>
<rect x="627.5" y="26.5" width="185" height="21" fill="#f0f0f0" stroke="#a4a8ae"/><rect x="814.5" y="26.5" width="48" height="21" fill="#f0f0f0" stroke="#a4a8ae"/>
<path d="M801.5 35L804.5 38L807.5 35M851.5 35L854.5 38L857.5 35" stroke="#a0a0a0" stroke-width="1.3" fill="none"/>
<g fill="#9a9a9a" stroke="#7e7e7e"><rect x="867.5" y="33.5" width="8" height="8"/><rect x="870.5" y="36.5" width="9" height="9"/><rect x="889.5" y="33.5" width="8" height="8"/><rect x="892.5" y="36.5" width="9" height="9"/><rect x="912.5" y="30.5" width="8" height="6"/><rect x="912.5" y="38.5" width="8" height="6"/></g>
<path d="M877 30.5H881V34M879 32.5L881 34.5L883 32.5M899 36V31.5H903M901 33.5L899 31.5L897 33.5" stroke="#7e7e7e" fill="none"/>
<path d="M920 34L926.5 40.5H923.5L925 44L923.5 44.5L922 41L920 43Z" fill="#8c8c8c"/>
<path d="M935 34L939 31L944 33V39L939 43L935 40Z" fill="#9a9a9a" stroke="#7e7e7e"/><path d="M940 42L947 35.5L949.5 33" stroke="#8c8c8c" stroke-width="2.2"/>
<path d="M977.5 38.5L982.5 43.5" stroke="#1a3a8a" stroke-width="2"/>
<circle cx="974.5" cy="35.5" r="4.6" fill="#fff" stroke="#333" stroke-width="1.1"/>
<rect x="972.5" y="33.5" width="4" height="4" fill="none" stroke="#000" stroke-width="1.2"/>
<path d="M999.5 38.5L1004.5 43.5" stroke="#9a9a9a" stroke-width="2"/>
<circle cx="996.5" cy="35.5" r="4.6" fill="#a8a8a8" stroke="#9a9a9a" stroke-width="1.1"/>
<path d="M994.5 33V38M998.5 33V38M996.5 34.5V35.5M996.5 36.5V37.5" stroke="#c8c8c8"/>
<path d="M1021.5 38.5L1026.5 43.5" stroke="#1a3a8a" stroke-width="2"/>
<circle cx="1018.5" cy="35.5" r="4.6" fill="#fff" stroke="#333" stroke-width="1.1"/>
<path d="M1015.7 35.5H1021.3M1018.5 32.7V38.3" stroke="#000" stroke-width="1.3"/>
<path d="M1043.5 38.5L1048.5 43.5" stroke="#1a3a8a" stroke-width="2"/>
<circle cx="1040.5" cy="35.5" r="4.6" fill="#fff" stroke="#333" stroke-width="1.1"/>
<path d="M1037.7 35.5H1043.3" stroke="#000" stroke-width="1.3"/>
<g fill="none" stroke="#444"><path d="M67.5 55.5H71.5L72.5 56.5V59.5H67.5ZM68.5 59.5V67.5H72.5M68.5 63.5H72.5"/><rect x="72.5" y="61.5" width="4" height="3"/><path d="M72.5 61.5V60.5H74.5L75 61.5"/><rect x="72.5" y="66.5" width="7" height="3.5"/><path d="M74 66.5V65.5H76L76.5 66.5"/></g>
</svg>
<svg class="abs" style="left:0;top:0" width="1062" height="774" viewBox="0 0 1062 774">
<use href="#folder" x="8" y="80" width="14" height="11"/>
<use href="#folder" x="8" y="119" width="14" height="11"/>
<rect x="8.5" y="93.5" width="21" height="19" fill="#cce4fa" stroke="#4d9ff0"/>
<rect x="52.5" y="93.5" width="21" height="19" fill="#cce4fa" stroke="#4d9ff0"/>
<path d="M15.5 96.5V106.5L17.5 104.5L20 109.5L21.5 108.5L19.5 103.5H22.5Z" fill="url(#gs)" stroke="#333"/>
<rect x="34.5" y="97.5" width="12" height="12" fill="none" stroke="#333" stroke-dasharray="2 1"/>
<rect x="41.5" y="99.5" width="4" height="3" fill="#ccc" stroke="#333"/><rect x="36.5" y="104.5" width="4" height="3" fill="#ccc" stroke="#333"/><path d="M43.5 102.5V104H40.5" stroke="#333" fill="none"/>
<rect x="58" y="100.5" width="9" height="4.5" rx="2.2" fill="#ddd" stroke="#444"/><path d="M62.5 97V99M62.5 106V108" stroke="#888"/>
<path d="M82.5 97.5Q82.5 95.5 85 95.5Q87.5 95.5 87.5 97.5V100.5L86.5 101.5V104.5H83.5V101.5L82.5 100.5Z" fill="url(#gs)" stroke="#333"/><path d="M83 104.5H87L91.5 107V109.5H78.5V107Z" fill="url(#gs)" stroke="#333"/><rect x="78" y="109" width="14" height="1.5" fill="#333"/>
<path d="M106.5 95.5L101.5 99H104.5V100.5H108.5V99H111.5Z" fill="#fff" stroke="#555"/><rect x="100.5" y="100" width="12" height="2.5" fill="#bbb" stroke="#555"/><rect x="100" y="104" width="13" height="2" fill="#555"/><path d="M101 106.5H112L106.5 111.5Z" fill="#555"/>
<rect x="122" y="95" width="13" height="2" fill="#555"/><path d="M123.5 97H133.5L128.5 102Z" fill="#555"/><path d="M128.5 102.5L123.5 106H126.5V107H130.5V106H133.5Z" fill="#fff" stroke="#555"/><rect x="122.5" y="107" width="12" height="3" fill="#ccc" stroke="#555"/>
<path d="M143.5 98.5V106.5M143 98.5H148.5M143 106.5H148.5M146.5 96.5L148.5 98.5L146.5 100.5M146.5 104.5L148.5 106.5L146.5 108.5" stroke="#333" fill="none"/><rect x="150.5" y="95.5" width="8" height="5.5" rx="1" fill="url(#gy)" stroke="#333"/><rect x="150.5" y="103.5" width="8" height="5.5" rx="1" fill="url(#gy)" stroke="#333"/><rect x="150" y="105.5" width="3" height="1.5" fill="#333"/><circle cx="157" cy="108.5" r="2" fill="#fff" stroke="#333"/>
<path d="M11.5 138.5H23.5L25.5 140.5V146.5H11.5Z" fill="#f4e9a8" stroke="#444"/><path d="M13 141.5H22M13 143.5H22M13 145.5H20" stroke="#555"/>
<text x="10" y="165.5" font-family="Liberation Sans" font-size="9" fill="#222" textLength="14">abc</text>
<rect x="16.5" y="176.5" width="8" height="7" fill="#f4e9a8" stroke="#444"/><path d="M18 178.5H23M18 180.5H23" stroke="#444"/><path d="M11 190L16 184" stroke="#444" stroke-dasharray="1.5 1"/>
<path d="M11 208L24 197" stroke="#3a5fd0" stroke-width="1.3" stroke-dasharray="3 1.5" fill="none"/><path d="M19.5 196.5H24.5V201.5" stroke="#3a5fd0" stroke-width="1.3" fill="none"/>
<rect x="11.5" y="216.5" width="13" height="11" fill="#1f4a66" stroke="#333"/><path d="M12 221Q15 218 18 220T24 219V224Q19 222 12 225Z" fill="#a9c7d6"/><path d="M12 225Q18 222 24 224V227H12Z" fill="#2d6670"/>
<path d="M13.5 240.5H24L25.5 242V250.5H13.5Z" fill="#f4f4f4" stroke="#555"/><rect x="16.5" y="243.5" width="3" height="2" fill="none" stroke="#555"/><rect x="20.5" y="246.5" width="3" height="2" fill="none" stroke="#555"/><path d="M11 237Q18 231 25 237Q18 242 11 237Z" fill="#fff" stroke="#333"/><circle cx="18" cy="236.5" r="2.2" fill="#2050c0"/>
<rect x="11.5" y="255.5" width="13" height="13" fill="#f8f8f8" stroke="#777"/><rect x="13" y="257" width="2" height="3" fill="#d02020"/><rect x="13" y="261" width="2" height="3" fill="#f0a000"/><rect x="13" y="265" width="2" height="2.5" fill="#20a0a0"/><path d="M16 258.5H23M16 262.5H23M16 266.5H23" stroke="#222"/>
<path d="M11 282.5H26" stroke="#444" stroke-dasharray="2.5 1.2"/>
<use href="#adiag" x="7" y="296" width="16" height="15"/>
<path d="M13.5 316.5H23.5L25.5 319V324L23.5 326.5H13.5L11.5 324V319Z" fill="url(#gy)" stroke="#444"/>
<rect x="11.5" y="336.5" width="14" height="9" fill="url(#gy)" stroke="#444"/>
<path d="M11 355.5H23.5V362M21.5 360L23.5 362.5L25.5 360" stroke="#3a5fd0" fill="none"/><rect x="18.5" y="364.5" width="6" height="3" fill="url(#gy)" stroke="#444"/>
<path d="M11.5 375L22.5 383.5M22.5 379V384H18" stroke="#3a5fd0" fill="none"/><rect x="19.5" y="384.5" width="6" height="3" rx="1" fill="url(#gy)" stroke="#444"/>
<path d="M11.5 395.5H21.5L25.5 401.5L21.5 407.5H11.5Z" fill="url(#gy)" stroke="#444"/>
<path d="M11.5 415.5H25.5V427.5H11.5L16.5 421.5Z" fill="url(#gy)" stroke="#444"/>
<path d="M11.5 435.5H23.5L17.5 441.5L23.5 447.5H11.5L17.5 441.5Z" fill="url(#gy)" stroke="#444"/><path d="M11 435.5H24M11 447.5H24" stroke="#444"/>
<circle cx="18" cy="461" r="4" fill="#444"/>
<circle cx="18" cy="481.3" r="5.2" fill="#fff" stroke="#444"/><circle cx="18" cy="481.3" r="3.2" fill="#444"/>
<path d="M10.5 501L17.5 497.5L24.5 501L17.5 504.5Z" fill="url(#gs)" stroke="#444"/><path d="M17.5 493V497.5M15.5 496L17.5 498L19.5 496M13 505L10.5 508.5M10.5 506V508.5H13M22 505L24.5 508.5M24.5 506V508.5H22" stroke="#3a5fd0" fill="none"/>
<path d="M10.5 521L17.5 517.5L24.5 521L17.5 524.5Z" fill="url(#gs)" stroke="#444"/><path d="M10.5 513.5L14 517M14 514.5V517H11.5M24.5 513.5L21 517M21 514.5V517H23.5M17.5 524.5V529M15.5 527L17.5 529L19.5 527" stroke="#3a5fd0" fill="none"/>
<path d="M13 536.5H21L13.5 546.5H23M20.5 544.5L23 546.5L20.5 548.5" stroke="#444" fill="none"/>
<rect x="10.5" y="554.5" width="15" height="14" rx="3" fill="url(#gy)" stroke="#555" stroke-dasharray="2 1"/><path d="M14 556h1M16 556h1M18 556h1M20 556h1M22 556h1M14 567h1M16 567h1M18 567h1M20 567h1M22 567h1" stroke="#444" stroke-width="2"/>
<rect x="12.5" y="577.5" width="8" height="7" fill="#e8e6cc" stroke="#444"/><path d="M14 581H19M17.5 579.5L19 581L17.5 582.5" stroke="#444" fill="none"/><path d="M24.5 573Q20.5 575 20.5 581Q20.5 587 24.5 589" stroke="#444" fill="none"/>
<path d="M80 603H91L85.5 597Z" fill="#444"/>
</svg>
</div></div>
</body></html>
